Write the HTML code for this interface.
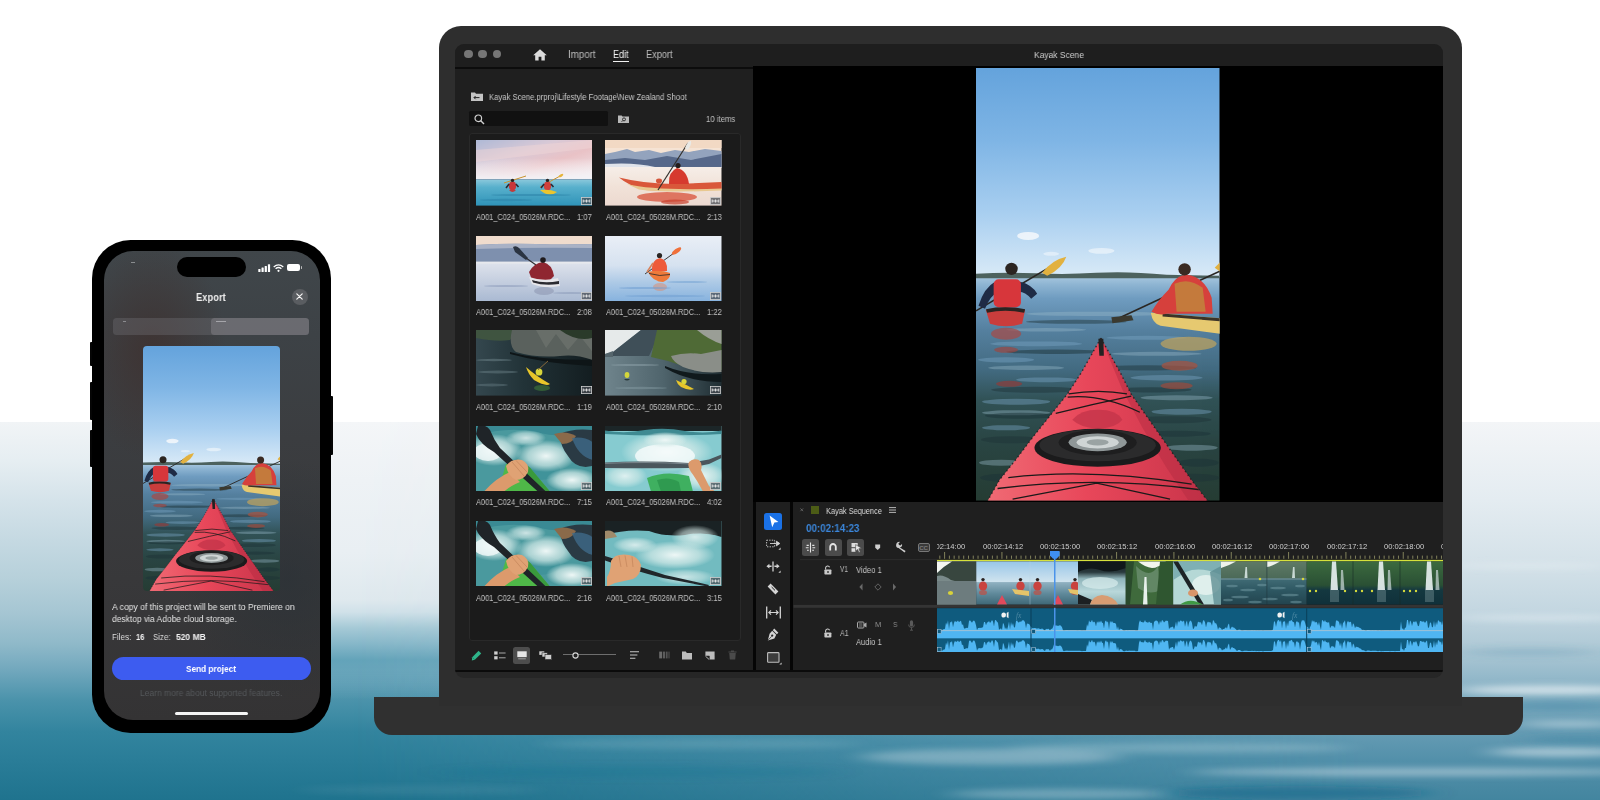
<!DOCTYPE html>
<html lang="en">
<head>
<meta charset="utf-8">
<title>Premiere – Kayak Scene</title>
<style>
*{box-sizing:border-box;margin:0;padding:0}
html,body{width:1600px;height:800px;overflow:hidden;background:#fff}
body{position:relative;font-family:"Liberation Sans",sans-serif;color:#c8c8c8;-webkit-font-smoothing:antialiased}
.abs{position:absolute}
.t{position:absolute;white-space:nowrap;line-height:1;transform-origin:0 50%;will-change:transform}
svg{position:absolute;overflow:visible}
/* background water */
#water{left:0;top:422px;width:1600px;height:378px}
/* laptop */
#lid{left:439px;top:26px;width:1023px;height:680px;background:#2e2e2e;border-radius:22px 22px 0 0}
#base{left:374px;top:697px;width:1149px;height:38px;background:#303030;border-radius:0 0 18px 18px}
#screen{left:455px;top:44px;width:988px;height:634px;background:#262626;border-radius:10px;overflow:hidden}
/* phone */
#phone{left:92px;top:240px;width:239px;height:493px;background:#000;border-radius:38.5px}
#pscreen{left:104px;top:251px;width:216px;height:469px;border-radius:35px;overflow:hidden;background:#3a3d40}
</style>
</head>
<body>
<svg width="0" height="0" style="left:0;top:0">
<defs>
<linearGradient id="gSky" x1="0" y1="0" x2="0" y2="1"><stop offset="0" stop-color="#64a3dc"/><stop offset=".35" stop-color="#7fb5e5"/><stop offset=".7" stop-color="#a9cff0"/><stop offset="1" stop-color="#d9eaf7"/></linearGradient>
<linearGradient id="gSea" x1="0" y1="0" x2="0" y2="1"><stop offset="0" stop-color="#a9c8e0"/><stop offset=".04" stop-color="#8db4d2"/><stop offset=".1" stop-color="#6f9cc0"/><stop offset=".24" stop-color="#55809f"/><stop offset=".42" stop-color="#426a80"/><stop offset=".55" stop-color="#315256"/><stop offset=".75" stop-color="#294442"/><stop offset="1" stop-color="#253c33"/></linearGradient>
<linearGradient id="gBow" x1="0" y1="0" x2="1" y2="0"><stop offset="0" stop-color="#f06a74"/><stop offset=".45" stop-color="#e8475a"/><stop offset="1" stop-color="#c9344a"/></linearGradient>
<symbol id="kscene" viewBox="0 0 243 433" preserveAspectRatio="none">
<rect x="0" y="0" width="243" height="209" fill="url(#gSky)"/>
<ellipse cx="52" cy="168" rx="11" ry="4" fill="#f4f8fc" opacity=".85"/><ellipse cx="125" cy="183" rx="13" ry="3" fill="#eef5fb" opacity=".7"/><ellipse cx="75" cy="186" rx="8" ry="2" fill="#eef5fb" opacity=".6"/>
<rect x="0" y="208" width="243" height="225" fill="url(#gSea)"/>
<path d="M0 206 Q30 204 60 205.5 T120 205 T190 207 L243 208 V210.5 H0 Z" fill="#4d625e"/>
<!-- ripples -->
<g fill="#9bbccc" opacity=".38"><ellipse cx="120" cy="246" rx="70" ry="2.2"/><ellipse cx="70" cy="262" rx="40" ry="1.8"/><ellipse cx="180" cy="286" rx="45" ry="2"/><ellipse cx="50" cy="300" rx="38" ry="2.2"/><ellipse cx="200" cy="330" rx="36" ry="2.4"/><ellipse cx="40" cy="345" rx="34" ry="2.6"/><ellipse cx="215" cy="380" rx="26" ry="3"/><ellipse cx="25" cy="395" rx="22" ry="3"/></g>
<g fill="#1d3236" opacity=".45"><ellipse cx="100" cy="254" rx="50" ry="2"/><ellipse cx="170" cy="300" rx="50" ry="2.6"/><ellipse cx="60" cy="322" rx="45" ry="3"/><ellipse cx="195" cy="352" rx="40" ry="3.4"/><ellipse cx="35" cy="372" rx="30" ry="3.6"/><ellipse cx="215" cy="410" rx="28" ry="4"/></g>
<g fill="#7aa6c6" opacity=".42"><ellipse cx="60" cy="276" rx="46" ry="2.4"/><ellipse cx="170" cy="270" rx="40" ry="2"/><ellipse cx="30" cy="292" rx="28" ry="2.6"/><ellipse cx="190" cy="310" rx="36" ry="2.8"/><ellipse cx="70" cy="312" rx="30" ry="2.4"/><ellipse cx="40" cy="334" rx="34" ry="3"/><ellipse cx="205" cy="344" rx="30" ry="3"/><ellipse cx="30" cy="360" rx="24" ry="2.6"/></g>
<g fill="#1c3338" opacity=".5"><ellipse cx="80" cy="284" rx="50" ry="2.2"/><ellipse cx="175" cy="322" rx="40" ry="2.6"/><ellipse cx="45" cy="348" rx="36" ry="3"/><ellipse cx="200" cy="366" rx="34" ry="3"/><ellipse cx="30" cy="410" rx="26" ry="4"/><ellipse cx="222" cy="395" rx="20" ry="4"/></g>
<!-- reflections -->
<g opacity=".7"><ellipse cx="30" cy="266" rx="15" ry="6" fill="#a84a46"/><ellipse cx="30" cy="282" rx="12" ry="3" fill="#9c4742"/><ellipse cx="33" cy="316" rx="13" ry="3" fill="#8e3c3a"/><ellipse cx="212" cy="276" rx="28" ry="7" fill="#c2a45c"/><ellipse cx="203" cy="298" rx="18" ry="5" fill="#a9523f"/><ellipse cx="200" cy="318" rx="16" ry="3.5" fill="#9a4a3c"/></g>
<!-- left kayaker -->
<path d="M0 243 L74 199" stroke="#2a2622" stroke-width="1.6"/>
<path d="M66 205 Q76 192 90 189 Q86 201 71 208 Z" fill="#e2b13f"/>
<path d="M9.8 242 Q29 238 49 242 L46 256 Q30 261 14 256 Z" fill="#c93d3c"/>
<path d="M10 241.5 Q29 237 49 241.5 L48 245 Q29 241 11 245 Z" fill="#2a2422"/>
<path d="M19 214 Q8 220 2.5 238 L9 241 Q14 228 22 224 Z M44 214 Q56 217 61 226 L55 231 Q49 224 43 224 Z" fill="#1f2b45"/>
<rect x="17.6" y="211.5" width="27.2" height="28" rx="5" fill="#d7363b"/>
<circle cx="35.4" cy="201" r="6.2" fill="#2b2421"/>
<!-- right kayaker -->
<path d="M139 252 L243.7 203" stroke="#2a2622" stroke-width="1.6"/>
<path d="M135 249.5 L155 247.5 L157 252.5 L136 255.5 Z" fill="#3b3a30"/>
<path d="M238 200 Q243.7 194 243.7 194 V204 Z" fill="#e2b13f"/>
<path d="M174.3 245 Q176 256 184 258 L243.7 266 V250.5 L186 245.7 Z" fill="#e6c970"/>
<path d="M186 245.7 L243.7 250.5 V253.5 L186 248.6 Z" fill="#3a3327"/>
<path d="M175 244 Q182 232 192 222 Q198 208 210 207 Q228 209 235 230 L236 246 H190 Q182 248 175 244 Z" fill="#d6403c"/>
<path d="M198 216 Q212 209 226 220 L229 244 H200 Z" fill="#c47a3c"/>
<circle cx="208" cy="201.5" r="6.2" fill="#3a2a22"/>
<!-- bow -->
<path d="M124.5 270.3 L105.1 304.7 L91.2 326.2 L74 347.7 L56.8 369.2 L40.6 390.7 L23.4 412.2 L11.6 433 H230.8 L214.8 412.2 L199.7 390.7 L184.7 369.2 L169.6 347.7 L154.6 326.2 L143.8 304.7 Z" fill="url(#gBow)"/>
<path d="M124.5 270.3 L143.8 304.7 L154.6 326.2 L169.6 347.7 L184.7 369.2 L199.7 390.7 L214.8 412.2 L230.8 433 H212 L190 400 L166 360 L146 322 Z" fill="#b52c42" opacity=".5"/>
<path d="M124.5 270.3 L105.1 304.7 L91.2 326.2 L74 347.7 L56.8 369.2 L40.6 390.7 L23.4 412.2 L11.6 433 M124.5 270.3 L143.8 304.7 L154.6 326.2 L169.6 347.7 L184.7 369.2 L199.7 390.7 L214.8 412.2 L230.8 433" stroke="#1c1a1a" stroke-width="1.4" stroke-dasharray="1.5 3" fill="none" opacity=".8"/>
<path d="M96 352 Q104 342 122 342 Q140 342 146 352 Q140 360 122 361 Q104 360 96 352 Z" fill="#c4354a" opacity=".8"/>
<g stroke="#1b1a1a" stroke-width="1.3" fill="none"><path d="M92.4 326.2 Q122.5 321 150.5 326.2"/><path d="M91.4 329.4 Q125 326 163.4 344.5"/><path d="M79.5 345.5 Q118 336 154.8 328.3"/><path d="M32.2 410 Q114 400 215 416.5"/><path d="M21.5 420.8 Q120 408 221.4 421.8"/><path d="M36.5 431.5 L120.4 415.4 L193.5 431.5"/></g>
<ellipse cx="121.3" cy="380" rx="63" ry="19" fill="#1b1b1c"/>
<ellipse cx="121.3" cy="377.5" rx="58" ry="16" fill="#2b2b2c"/>
<ellipse cx="121.3" cy="374.8" rx="39" ry="12.6" fill="#1e1e1f"/>
<ellipse cx="121.3" cy="374.6" rx="29" ry="8.8" fill="#8f9798"/>
<ellipse cx="121.3" cy="374.6" rx="21" ry="6.2" fill="#cfd5d5"/>
<ellipse cx="121.3" cy="374.6" rx="11" ry="3.2" fill="#9aa3a3"/>
<path d="M122 271 L127 271 L127.5 288 L123 288 Z" fill="#222"/>
</symbol>
</defs>
</svg>
<div id="water" class="abs" style="background:linear-gradient(180deg,#f1f4f6 0.0%,#e6eef2 10.1%,#d5e3ea 20.6%,#c5d9e2 31.2%,#b6d0da 41.8%,#a6c6d3 50.3%,#8fb9c9 58.7%,#74a9be 65.1%,#4b93ab 73.5%,#32849e 82.0%,#2a7d98 89.4%,#1f738e 100.0%)"></div>
<div class="abs" style="left:180px;top:422px;width:420px;height:378px;background:linear-gradient(180deg,#f4f6f8 0.0%,#eef2f5 15.3%,#e9eff3 34.4%,#dfe9ee 47.1%,#d0e1e9 50.3%,#a5c9d6 54.5%,#86b7c9 58.7%,#63a3b9 63.0%,rgba(69,144,169,0) 73.5%,rgba(69,144,169,0) 100.0%);-webkit-mask-image:linear-gradient(90deg,transparent 0%,#000 36%,#000 100%);mask-image:linear-gradient(90deg,transparent 0%,#000 36%,#000 100%)"></div>
<div class="abs" style="left:0;top:422px;width:1600px;height:378px;background:linear-gradient(180deg,#f3f5f7 0.0%,#e4ecf1 20.6%,#d5e2e9 36.5%,#c4d7e1 49.7%,#adc8d5 60.3%,#91b7c9 68.3%,#7dabbf 73.5%,#669cb4 81.5%,#5390aa 89.4%,#43859f 100.0%);-webkit-mask-image:linear-gradient(90deg,transparent 22%,#000 85%);mask-image:linear-gradient(90deg,transparent 22%,#000 85%)"></div>
<svg style="left:0;top:0" width="1600" height="800" viewBox="0 0 1600 800"><defs><filter id="fb" x="-30%" y="-300%" width="160%" height="700%"><feGaussianBlur stdDeviation="14 3"/></filter></defs>
<g filter="url(#fb)" fill="#eef4f7">
<ellipse cx="1545" cy="618" rx="90" ry="3" opacity=".5"/>
<ellipse cx="1530" cy="566" rx="80" ry="2.5" opacity=".45"/>
<ellipse cx="1550" cy="690" rx="90" ry="4.5" opacity=".7"/>
<ellipse cx="1570" cy="724" rx="50" ry="3" opacity=".45"/>
<ellipse cx="1560" cy="752" rx="70" ry="5" opacity=".5"/>
<ellipse cx="1420" cy="772" rx="230" ry="4" opacity=".42"/>
<ellipse cx="990" cy="757" rx="130" ry="8" opacity=".32"/>
<ellipse cx="1180" cy="748" rx="170" ry="5" opacity=".22"/>
<ellipse cx="1060" cy="794" rx="110" ry="5" opacity=".3"/>
<ellipse cx="700" cy="744" rx="160" ry="5" opacity=".12"/>
<ellipse cx="420" cy="790" rx="120" ry="4" opacity=".08"/>
</g>
<g filter="url(#fb)" fill="#3f85a3"><ellipse cx="1560" cy="706" rx="70" ry="5" opacity=".45"/><ellipse cx="1580" cy="740" rx="50" ry="5" opacity=".4"/><ellipse cx="1530" cy="652" rx="70" ry="4" opacity=".22"/></g>
<g filter="url(#fb)" fill="#14678a"><ellipse cx="1300" cy="793" rx="130" ry="7" opacity=".55"/><ellipse cx="640" cy="772" rx="200" ry="6" opacity=".18"/></g>
</svg>
<div id="base" class="abs"></div>
<div id="lid" class="abs"></div>
<div id="scr" class="abs" style="left:0;top:0;width:1600px;height:800px;clip-path:inset(44px 157px 122px 455px round 9px)">
<div class="abs" style="left:455.0px;top:44.0px;width:988.0px;height:634.0px;background:#262626;"></div>
<div class="abs" style="left:455.0px;top:44.0px;width:988.0px;height:23.0px;background:#1e1e1e;"></div>
<div class="abs" style="left:455.0px;top:66.9px;width:298.0px;height:1.7px;background:#0c0c0c;"></div>
<div class="abs" style="left:464.4px;top:49.6px;width:8.8px;height:8.8px;background:#767676;border-radius:50%"></div>
<div class="abs" style="left:478.4px;top:49.6px;width:8.8px;height:8.8px;background:#767676;border-radius:50%"></div>
<div class="abs" style="left:492.5px;top:49.6px;width:8.8px;height:8.8px;background:#767676;border-radius:50%"></div>
<svg style="left:533px;top:49px" width="14" height="12" viewBox="0 0 14 12"><path d="M7 0.3 L0.2 6.2 H2.2 V11.6 H5.6 V7.8 H8.4 V11.6 H11.8 V6.2 H13.8 Z" fill="#dcdcdc"/></svg>
<div class="t" style="left:568.3px;top:50.0px;font-size:10.00px;color:#bdbdbd;transform:scaleX(0.974);">Import</div>
<div class="t" style="left:613.4px;top:50.0px;font-size:10.00px;color:#f2f2f2;transform:scaleX(0.900);">Edit</div>
<div class="abs" style="left:613.4px;top:61.0px;width:15.5px;height:1.3px;background:#f2f2f2;"></div>
<div class="t" style="left:645.7px;top:50.0px;font-size:10.00px;color:#bdbdbd;transform:scaleX(0.920);">Export</div>
<div class="t" style="left:1033.5px;top:49.8px;font-size:9.60px;color:#d0d0d0;transform:scaleX(0.884);">Kayak Scene</div>
<div class="abs" style="left:455.0px;top:68.6px;width:298.0px;height:601.5px;background:#1f1f1f;"></div>
<div class="abs" style="left:753.0px;top:66.3px;width:3.0px;height:603.5px;background:#050505;"></div>
<svg style="left:470.5px;top:92px" width="12" height="9" viewBox="0 0 12 9"><path d="M0 0.6 H4 L5 1.8 H12 V9 H0 Z" fill="#c4c4c4"/><path d="M3 5.6 H8.5 M4.6 4 L3 5.6 L4.6 7.2" stroke="#222" stroke-width="1" fill="none"/></svg>
<div class="t" style="left:489.0px;top:92.5px;font-size:9.00px;color:#c6c6c6;transform:scaleX(0.855);">Kayak Scene.prproj\Lifestyle Footage\New Zealand Shoot</div>
<div class="abs" style="left:468.8px;top:110.5px;width:139.6px;height:15.6px;background:#111111;border-radius:1.5px"></div>
<svg style="left:474px;top:113.5px" width="11" height="11" viewBox="0 0 11 11"><circle cx="4.3" cy="4.3" r="3.3" fill="none" stroke="#cfcfcf" stroke-width="1.2"/><path d="M6.8 6.8 L10 10" stroke="#cfcfcf" stroke-width="1.4"/></svg>
<svg style="left:617.5px;top:114.5px" width="11" height="8" viewBox="0 0 11 8"><path d="M0 0.5 H3.6 L4.5 1.5 H11 V8 H0 Z" fill="#b9b9b9"/><circle cx="6" cy="4.4" r="1.5" fill="none" stroke="#222" stroke-width="0.9"/><path d="M4.9 5.5 L3.6 6.8" stroke="#222" stroke-width="0.9"/></svg>
<div class="t" style="left:706.0px;top:114.8px;font-size:8.80px;color:#c0c0c0;transform:scaleX(0.881);">10 items</div>
<div class="abs" style="left:469.0px;top:133.0px;width:272.0px;height:507.5px;background:#1b1b1b;border:1px solid #292929;border-radius:3px"></div>
<svg style="left:0;top:0" width="0" height="0"><defs>
<linearGradient id="t1s" x1="0" y1="0" x2="1" y2="1"><stop offset="0" stop-color="#aeb9d6"/><stop offset=".35" stop-color="#d9c9d6"/><stop offset=".6" stop-color="#e9c2c6"/><stop offset="1" stop-color="#f0e6ea"/></linearGradient>
<linearGradient id="t1f" x1="0" y1="0" x2="0" y2="1"><stop offset="0" stop-color="#fff" stop-opacity="0"/><stop offset="1" stop-color="#f2f4f8" stop-opacity=".95"/></linearGradient>
<linearGradient id="t1w" x1="0" y1="0" x2="0" y2="1"><stop offset="0" stop-color="#8cc9dc"/><stop offset=".3" stop-color="#58b0cc"/><stop offset="1" stop-color="#2f93b8"/></linearGradient>
<linearGradient id="t2w" x1="0" y1="0" x2="0" y2="1"><stop offset="0" stop-color="#f6eee8"/><stop offset=".5" stop-color="#f1e2d8"/><stop offset="1" stop-color="#ecd9d0"/></linearGradient>
<linearGradient id="t3w" x1="0" y1="0" x2="0" y2="1"><stop offset="0" stop-color="#dfe3ec"/><stop offset="1" stop-color="#a9b9d2"/></linearGradient>
<linearGradient id="t4w" x1="0" y1="0" x2="0" y2="1"><stop offset="0" stop-color="#e9eef6"/><stop offset=".45" stop-color="#d6e2f0"/><stop offset=".7" stop-color="#aecae6"/><stop offset="1" stop-color="#86b2de"/></linearGradient>
<linearGradient id="t5w" x1="0" y1="0" x2="1" y2="0"><stop offset="0" stop-color="#34474e"/><stop offset=".4" stop-color="#223338"/><stop offset="1" stop-color="#131d20"/></linearGradient>
<linearGradient id="t6w" x1="0" y1="0" x2="1" y2="0"><stop offset="0" stop-color="#6f848c"/><stop offset=".5" stop-color="#4f646c"/><stop offset="1" stop-color="#1f2d32"/></linearGradient>
<radialGradient id="tfoam" cx=".5" cy=".5" r=".5"><stop offset="0" stop-color="#eef7f6"/><stop offset=".6" stop-color="#d5ebe9" stop-opacity=".7"/><stop offset="1" stop-color="#dff1ef" stop-opacity="0"/></radialGradient>
<clipPath id="tclip"><rect x="0" y="0" width="116.5" height="65.6"/></clipPath>
</defs></svg>
<svg style="left:475.8px;top:140.3px;overflow:hidden" width="116.5" height="65.6" viewBox="0 0 116.5 65.6"><rect width="116.5" height="40" fill="url(#t1s)"/><rect y="18" width="116.5" height="22" fill="url(#t1f)"/><path d="M0 10 L116.5 0 V8 L0 22 Z" fill="#f2d6d8" opacity=".45"/><rect y="39.3" width="116.5" height="26.3" fill="url(#t1w)"/><rect y="39" width="116.5" height="1" fill="#6f8fa8" opacity=".7"/><path d="M28 43 L50 36" stroke="#c9932e" stroke-width="1"/><path d="M64 47 L86 35" stroke="#c9932e" stroke-width="1"/><ellipse cx="85" cy="35.6" rx="2.6" ry="1.2" fill="#e6b43a" transform="rotate(-30 85 35.6)"/><g transform="translate(36.5 46.0) scale(1.00)"><ellipse cx="0" cy="0" rx="3.6" ry="4.4" fill="#c8363a"/><circle cx="0" cy="-5.6" r="1.7" fill="#2a2220"/><path d="M-3.4 -2 L-6.5 2 M3.4 -2 L6 1" stroke="#2a2a35" stroke-width="1.6"/></g><g transform="translate(71.5 46.0) scale(1.00)"><ellipse cx="0" cy="0" rx="3.6" ry="4.4" fill="#d0403a"/><circle cx="0" cy="-5.6" r="1.7" fill="#2a2220"/><path d="M-3.4 -2 L-6.5 2 M3.4 -2 L6 1" stroke="#2a2a35" stroke-width="1.6"/></g><path d="M33 50 Q36.5 54 40 50 Z" fill="#c23a3a"/><path d="M64 50 Q73 58 81 52 Q74 49 64 50 Z" fill="#ecc52e"/><ellipse cx="55" cy="55" rx="40" ry="1" fill="#2a7fa6" opacity=".5"/><ellipse cx="30" cy="60" rx="26" ry="1.2" fill="#2a7fa6" opacity=".5"/></svg>
<svg style="left:605.4px;top:140.3px;overflow:hidden" width="116.5" height="65.6" viewBox="0 0 116.5 65.6"><rect width="116.5" height="28" fill="#f5e3d4"/><rect width="116.5" height="8" fill="#f2d9c4"/><path d="M0 14 L10 12 L22 9 L30 12 L44 10 L56 13 L70 10 L84 12 L100 9 L116.5 11 V27 H0 Z" fill="#93a3bd"/><path d="M0 20 L20 18 L40 20 L62 16 L86 20 L116.5 14 V28 H0 Z" fill="#56688a"/><path d="M0 24 Q30 22 50 27 H0 Z" fill="#dfe3ea"/><rect y="27" width="116.5" height="38.6" fill="url(#t2w)"/><ellipse cx="62" cy="57" rx="30" ry="5" fill="#d8503a" opacity=".75"/><ellipse cx="70" cy="62" rx="14" ry="2.5" fill="#c8402e" opacity=".7"/><path d="M14 37.5 Q40 44 70 44 L116.5 42 V49 Q70 52 40 50 Q24 46 14 37.5 Z" fill="#d9573a"/><path d="M22 44 Q50 51 116.5 48.5 V50.5 Q60 53 34 49.5 Z" fill="#e8c890"/><path d="M53 50 L83 3" stroke="#33302c" stroke-width="1.2"/><path d="M80 8 Q83 0 86 1 Q87 5 82.5 10 Z" fill="#e9e9e6"/><path d="M64 44 Q63 32 72 28 Q82 30 84 44 Z" fill="#d63a2e"/><circle cx="73" cy="25.5" r="2.6" fill="#231c1a"/><ellipse cx="54" cy="41" rx="3" ry="2.4" fill="#d4553a"/></svg>
<svg style="left:475.8px;top:235.5px;overflow:hidden" width="116.5" height="65.6" viewBox="0 0 116.5 65.6"><rect width="116.5" height="12" fill="#f0dccd"/><path d="M0 9 Q30 7 60 8 T116.5 8 V27 H0 Z" fill="#7e90ae"/><path d="M0 9 Q30 7 60 8 T116.5 8 V12 Q60 11 0 13 Z" fill="#a9b2c6"/><rect y="26" width="116.5" height="39.6" fill="url(#t3w)"/><rect y="25.5" width="116.5" height="2.2" fill="#e9eaee" opacity=".8"/><path d="M37 11 Q40 9 43 12 L52 22 L50 24 L39 16 Z" fill="#2b3442"/><path d="M50 22 L60 29" stroke="#2b2b30" stroke-width="1.1"/><path d="M53 36 Q58 27 67 26 Q76 28 78 40 L74 44 H56 Z" fill="#8f2630"/><circle cx="67" cy="24" r="2.8" fill="#1f1a1c"/><path d="M53 41 Q68 46 82 42 L84 50 Q68 53 56 48 Z" fill="#e6e6ea"/><path d="M56 44 Q68 48 83 45 L83 48 Q68 50 57 46.5 Z" fill="#2a2a30"/><ellipse cx="68" cy="55" rx="10" ry="4" fill="#8a93ae" opacity=".55"/><ellipse cx="30" cy="50" rx="22" ry="1" fill="#8f9fbd" opacity=".6"/><ellipse cx="95" cy="57" rx="18" ry="1" fill="#8f9fbd" opacity=".6"/></svg>
<svg style="left:605.4px;top:235.5px;overflow:hidden" width="116.5" height="65.6" viewBox="0 0 116.5 65.6"><rect width="116.5" height="65.6" fill="url(#t4w)"/><path d="M40 38 L76 12" stroke="#3a3a3a" stroke-width="1"/><ellipse cx="71.5" cy="15" rx="5.6" ry="2.2" fill="#f0703a" transform="rotate(-36 71.5 15)"/><path d="M47 35 Q46 24 55 22 Q63 24 62 35 Z" fill="#ee5a3a"/><circle cx="54.5" cy="19.5" r="2.6" fill="#2a2624"/><path d="M48 27 L42 36" stroke="#d8825a" stroke-width="1.6"/><path d="M43 36 Q55 33 65 37 Q66 43 58 46 Q48 46 43 36 Z" fill="#ee7a3a"/><path d="M44 37.5 Q55 41 65 38.5" stroke="#2a2a2a" stroke-width=".8" fill="none"/><ellipse cx="55" cy="51" rx="7" ry="4" fill="#e08a6a" opacity=".5"/><ellipse cx="40" cy="52" rx="26" ry="1.1" fill="#6f9fd2" opacity=".55"/><ellipse cx="82" cy="46" rx="20" ry="1" fill="#6f9fd2" opacity=".5"/><ellipse cx="60" cy="60" rx="40" ry="1.2" fill="#6f9fd2" opacity=".55"/></svg>
<svg style="left:475.8px;top:330.2px;overflow:hidden" width="116.5" height="65.6" viewBox="0 0 116.5 65.6"><rect width="116.5" height="65.6" fill="url(#t5w)"/><path d="M0 0 H40 L34 10 Q20 12 0 8 Z" fill="#3f5440"/><path d="M36 0 H116.5 V30 Q100 24 84 26 Q60 28 40 22 Q32 16 36 0 Z" fill="#5a615d"/><path d="M60 0 L70 18 L80 4 L92 20 L104 6 L116.5 22 V0 Z" fill="#767b75" opacity=".5"/><path d="M84 0 H116.5 V8 Q100 12 84 0 Z" fill="#2a3a2a"/><path d="M34 22 Q60 30 116.5 30 V36 Q70 34 34 24 Z" fill="#0e1517"/><ellipse cx="18" cy="30" rx="18" ry="1.2" fill="#6f858c" opacity=".5"/><ellipse cx="22" cy="42" rx="20" ry="1.4" fill="#6f858c" opacity=".45"/><ellipse cx="16" cy="55" rx="16" ry="1.4" fill="#6f858c" opacity=".4"/><path d="M50 37 Q60 46 74 54 Q70 57 58 50 Q52 44 50 37 Z" fill="#e8c62a"/><ellipse cx="63" cy="42" rx="3.4" ry="3.6" fill="#d9d63a"/><path d="M62 40 L72 31" stroke="#8a6a3a" stroke-width="1"/><ellipse cx="66" cy="58" rx="8" ry="3" fill="#3f7a3a" opacity=".6"/></svg>
<svg style="left:605.4px;top:330.2px;overflow:hidden" width="116.5" height="65.6" viewBox="0 0 116.5 65.6"><rect width="116.5" height="65.6" fill="url(#t6w)"/><path d="M0 0 H36 L8 22 L0 24 Z" fill="#e6eaea"/><path d="M36 0 H56 L44 26 H8 L8 22 Z" fill="#3f4f58"/><path d="M0 24 L8 21 L8 27 H0 Z" fill="#55656c"/><path d="M52 0 H116.5 V40 Q96 42 78 36 Q62 30 46 27 Z" fill="#4f6a36"/><path d="M66 26 Q80 22 96 24 L116.5 20 V42 Q96 44 78 37 Q68 32 66 26 Z" fill="#8a8e88"/><path d="M92 0 L116.5 0 V14 Q104 10 92 0 Z" fill="#9a9e96"/><path d="M60 36 Q84 46 116.5 44 V52 Q84 52 60 38 Z" fill="#10191c"/><ellipse cx="22" cy="45" rx="2.4" ry="3" fill="#d4d63a"/><path d="M19 49 Q22 52 25 49 Z" fill="#2a3a3a"/><path d="M71 50 Q80 54 89 59 Q84 61 76 57 Q72 54 71 50 Z" fill="#e8c62a"/><ellipse cx="79" cy="51.5" rx="2.6" ry="2.6" fill="#d9d63a"/><ellipse cx="30" cy="35" rx="24" ry="1" fill="#8fa4ac" opacity=".5"/><ellipse cx="36" cy="58" rx="26" ry="1.2" fill="#8fa4ac" opacity=".4"/></svg>
<svg style="left:475.8px;top:425.5px;overflow:hidden" width="116.5" height="65.6" viewBox="0 0 116.5 65.6"><rect width="116.5" height="65.6" fill="#4a999e"/><path d="M0 10 Q30 0 60 6 Q90 14 116.5 4 V0 H0 Z" fill="#3a8a94"/><ellipse cx="62" cy="44" rx="22" ry="10" fill="#3a8f98" opacity=".6"/><ellipse cx="18" cy="24" rx="28" ry="16" fill="url(#tfoam)"/><ellipse cx="12" cy="26" rx="14" ry="9" fill="#f4fafa" opacity=".8"/><ellipse cx="70" cy="30" rx="30" ry="16" fill="url(#tfoam)"/><ellipse cx="96" cy="54" rx="26" ry="12" fill="url(#tfoam)"/><ellipse cx="50" cy="12" rx="20" ry="8" fill="url(#tfoam)" opacity=".8"/><path d="M84 8 Q96 2 116.5 4 V40 Q100 44 92 30 Q84 20 84 8 Z" fill="#2a3a44"/><path d="M78 8 Q90 4 100 10 Q96 18 86 18 Z" fill="#8a6a4a"/><path d="M96 12 Q108 10 116.5 16 V34 Q102 30 96 12 Z" fill="#3f6a8a" opacity=".8"/><path d="M30 38 Q48 34 54 42 L74 65.6 H22 Z" fill="#4fb848"/><path d="M44 40 Q52 38 56 44 L74 65.6 H62 Z" fill="#3a9a3c"/><path d="M2 0 Q10 -2 14 4 Q18 14 24 22 L70 65.6 H62 L18 26 Q4 18 0 8 Z" fill="#1f2428"/><path d="M8 65.6 Q20 52 34 46 L44 56 Q34 60 28 65.6 Z" fill="#dc9a6c"/><path d="M30 40 Q36 32 46 34 Q54 38 52 46 Q48 54 40 54 Q32 50 30 40 Z" fill="#e0a274"/><path d="M36 36 L48 50 M40 34.5 L51 46" stroke="#b87850" stroke-width=".7" opacity=".7"/></svg>
<svg style="left:605.4px;top:425.5px;overflow:hidden" width="116.5" height="65.6" viewBox="0 0 116.5 65.6"><rect width="116.5" height="65.6" fill="#86cbd0"/><rect width="116.5" height="5" fill="#1c2628"/><path d="M0 4.5 Q20 8 40 4 Q60 1 80 5 Q100 8 116.5 4.5 V8 Q60 11 0 8 Z" fill="#3f8a92"/><ellipse cx="62" cy="26" rx="46" ry="20" fill="url(#tfoam)"/><ellipse cx="60" cy="30" rx="30" ry="12" fill="#f6fbfb" opacity=".8"/><ellipse cx="96" cy="50" rx="24" ry="14" fill="url(#tfoam)"/><ellipse cx="20" cy="50" rx="22" ry="12" fill="url(#tfoam)" opacity=".85"/><ellipse cx="60" cy="14" rx="22" ry="8" fill="url(#tfoam)"/><path d="M42 52 Q60 44 84 50 L88 65.6 H46 Z" fill="#3fb060"/><path d="M52 54 Q64 50 74 56 L76 65.6 H56 Z" fill="#2f9a50"/><path d="M0 36.5 Q40 34.5 84 37 L104 33.5 L116.5 28.5 V32 L104 38 L84 42 Q40 42.5 0 42 Z" fill="#4a565c"/><path d="M0 37.4 Q40 35.4 84 37.9" stroke="#9aa6ac" stroke-width=".6" fill="none"/><path d="M84 36 Q88 32 94 34 Q98 38 96 44 L104 60 L110 65.6 H98 Q92 54 86 46 Q82 40 84 36 Z" fill="#dc9a6c"/></svg>
<svg style="left:475.8px;top:520.8px;overflow:hidden" width="116.5" height="65.6" viewBox="0 0 116.5 65.6"><rect width="116.5" height="65.6" fill="#4a999e"/><path d="M0 10 Q30 0 60 6 Q90 14 116.5 4 V0 H0 Z" fill="#3a8a94"/><ellipse cx="62" cy="44" rx="22" ry="10" fill="#3a8f98" opacity=".6"/><ellipse cx="18" cy="24" rx="28" ry="16" fill="url(#tfoam)"/><ellipse cx="12" cy="26" rx="14" ry="9" fill="#f4fafa" opacity=".8"/><ellipse cx="70" cy="30" rx="30" ry="16" fill="url(#tfoam)"/><ellipse cx="96" cy="54" rx="26" ry="12" fill="url(#tfoam)"/><ellipse cx="50" cy="12" rx="20" ry="8" fill="url(#tfoam)" opacity=".8"/><path d="M84 8 Q96 2 116.5 4 V40 Q100 44 92 30 Q84 20 84 8 Z" fill="#2a3a44"/><path d="M78 8 Q90 4 100 10 Q96 18 86 18 Z" fill="#8a6a4a"/><path d="M96 12 Q108 10 116.5 16 V34 Q102 30 96 12 Z" fill="#3f6a8a" opacity=".8"/><path d="M30 38 Q48 34 54 42 L74 65.6 H22 Z" fill="#4fb848"/><path d="M44 40 Q52 38 56 44 L74 65.6 H62 Z" fill="#3a9a3c"/><path d="M2 0 Q10 -2 14 4 Q18 14 24 22 L70 65.6 H62 L18 26 Q4 18 0 8 Z" fill="#1f2428"/><path d="M8 65.6 Q20 52 34 46 L44 56 Q34 60 28 65.6 Z" fill="#dc9a6c"/><path d="M30 40 Q36 32 46 34 Q54 38 52 46 Q48 54 40 54 Q32 50 30 40 Z" fill="#e0a274"/><path d="M36 36 L48 50 M40 34.5 L51 46" stroke="#b87850" stroke-width=".7" opacity=".7"/></svg>
<svg style="left:605.4px;top:520.8px;overflow:hidden" width="116.5" height="65.6" viewBox="0 0 116.5 65.6"><rect width="116.5" height="65.6" fill="#72bbc0"/><path d="M0 0 H116.5 V16 Q100 10 80 14 Q60 16 44 10 Q20 8 0 14 Z" fill="#1a2224"/><path d="M0 10 Q8 8 12 16 L0 18 Z" fill="#a08a6a"/><ellipse cx="70" cy="34" rx="40" ry="14" fill="url(#tfoam)"/><ellipse cx="90" cy="16" rx="24" ry="12" fill="url(#tfoam)" opacity=".8"/><ellipse cx="30" cy="24" rx="22" ry="8" fill="url(#tfoam)" opacity=".8"/><ellipse cx="80" cy="56" rx="30" ry="8" fill="url(#tfoam)" opacity=".7"/><path d="M0 35 Q30 44 60 54 L104 64 L103 65.6 L58 57 Q30 50 0 39.5 Z" fill="#20262a"/><path d="M6 40 Q10 32 24 34 Q34 36 36 44 Q36 54 28 58 L10 62 L2 65.6 V56 Q6 50 6 40 Z" fill="#e0a274"/><path d="M14 35 L16 46 M20 34.5 L22 46 M27 35.5 L28 46" stroke="#b87850" stroke-width=".7" opacity=".7"/></svg>
<div class="t" style="left:476.1px;top:212.9px;font-size:8.30px;color:#c2c2c2;transform:scaleX(0.892);">A001_C024_05026M.RDC...</div>
<div class="t" style="left:577.0px;top:212.9px;font-size:8.30px;color:#c2c2c2;transform:scaleX(0.916);">1:07</div>
<svg style="left:580.6px;top:196.5px" width="11" height="8" viewBox="0 0 11 8"><rect x="0.4" y="0.4" width="10.2" height="7.2" fill="#4a4f55" fill-opacity=".75" stroke="#d0d0d0" stroke-width=".8"/><path d="M2.2 2.5V5.5M5.5 2.5V5.5M8.8 2.5V5.5M2.2 4H8.8" stroke="#e6e6e6" stroke-width=".9"/></svg>
<div class="t" style="left:605.7px;top:212.9px;font-size:8.30px;color:#c2c2c2;transform:scaleX(0.892);">A001_C024_05026M.RDC...</div>
<div class="t" style="left:706.6px;top:212.9px;font-size:8.30px;color:#c2c2c2;transform:scaleX(0.916);">2:13</div>
<svg style="left:710.2px;top:196.5px" width="11" height="8" viewBox="0 0 11 8"><rect x="0.4" y="0.4" width="10.2" height="7.2" fill="#4a4f55" fill-opacity=".75" stroke="#d0d0d0" stroke-width=".8"/><path d="M2.2 2.5V5.5M5.5 2.5V5.5M8.8 2.5V5.5M2.2 4H8.8" stroke="#e6e6e6" stroke-width=".9"/></svg>
<div class="t" style="left:476.1px;top:308.2px;font-size:8.30px;color:#c2c2c2;transform:scaleX(0.892);">A001_C024_05026M.RDC...</div>
<div class="t" style="left:577.0px;top:308.2px;font-size:8.30px;color:#c2c2c2;transform:scaleX(0.916);">2:08</div>
<svg style="left:580.6px;top:291.7px" width="11" height="8" viewBox="0 0 11 8"><rect x="0.4" y="0.4" width="10.2" height="7.2" fill="#4a4f55" fill-opacity=".75" stroke="#d0d0d0" stroke-width=".8"/><path d="M2.2 2.5V5.5M5.5 2.5V5.5M8.8 2.5V5.5M2.2 4H8.8" stroke="#e6e6e6" stroke-width=".9"/></svg>
<div class="t" style="left:605.7px;top:308.2px;font-size:8.30px;color:#c2c2c2;transform:scaleX(0.892);">A001_C024_05026M.RDC...</div>
<div class="t" style="left:706.6px;top:308.2px;font-size:8.30px;color:#c2c2c2;transform:scaleX(0.916);">1:22</div>
<svg style="left:710.2px;top:291.7px" width="11" height="8" viewBox="0 0 11 8"><rect x="0.4" y="0.4" width="10.2" height="7.2" fill="#4a4f55" fill-opacity=".75" stroke="#d0d0d0" stroke-width=".8"/><path d="M2.2 2.5V5.5M5.5 2.5V5.5M8.8 2.5V5.5M2.2 4H8.8" stroke="#e6e6e6" stroke-width=".9"/></svg>
<div class="t" style="left:476.1px;top:402.8px;font-size:8.30px;color:#c2c2c2;transform:scaleX(0.892);">A001_C024_05026M.RDC...</div>
<div class="t" style="left:577.0px;top:402.8px;font-size:8.30px;color:#c2c2c2;transform:scaleX(0.916);">1:19</div>
<svg style="left:580.6px;top:386.4px" width="11" height="8" viewBox="0 0 11 8"><rect x="0.4" y="0.4" width="10.2" height="7.2" fill="#4a4f55" fill-opacity=".75" stroke="#d0d0d0" stroke-width=".8"/><path d="M2.2 2.5V5.5M5.5 2.5V5.5M8.8 2.5V5.5M2.2 4H8.8" stroke="#e6e6e6" stroke-width=".9"/></svg>
<div class="t" style="left:605.7px;top:402.8px;font-size:8.30px;color:#c2c2c2;transform:scaleX(0.892);">A001_C024_05026M.RDC...</div>
<div class="t" style="left:706.6px;top:402.8px;font-size:8.30px;color:#c2c2c2;transform:scaleX(0.916);">2:10</div>
<svg style="left:710.2px;top:386.4px" width="11" height="8" viewBox="0 0 11 8"><rect x="0.4" y="0.4" width="10.2" height="7.2" fill="#4a4f55" fill-opacity=".75" stroke="#d0d0d0" stroke-width=".8"/><path d="M2.2 2.5V5.5M5.5 2.5V5.5M8.8 2.5V5.5M2.2 4H8.8" stroke="#e6e6e6" stroke-width=".9"/></svg>
<div class="t" style="left:476.1px;top:498.2px;font-size:8.30px;color:#c2c2c2;transform:scaleX(0.892);">A001_C024_05026M.RDC...</div>
<div class="t" style="left:577.0px;top:498.2px;font-size:8.30px;color:#c2c2c2;transform:scaleX(0.916);">7:15</div>
<svg style="left:580.6px;top:481.7px" width="11" height="8" viewBox="0 0 11 8"><rect x="0.4" y="0.4" width="10.2" height="7.2" fill="#4a4f55" fill-opacity=".75" stroke="#d0d0d0" stroke-width=".8"/><path d="M2.2 2.5V5.5M5.5 2.5V5.5M8.8 2.5V5.5M2.2 4H8.8" stroke="#e6e6e6" stroke-width=".9"/></svg>
<div class="t" style="left:605.7px;top:498.2px;font-size:8.30px;color:#c2c2c2;transform:scaleX(0.892);">A001_C024_05026M.RDC...</div>
<div class="t" style="left:706.6px;top:498.2px;font-size:8.30px;color:#c2c2c2;transform:scaleX(0.916);">4:02</div>
<svg style="left:710.2px;top:481.7px" width="11" height="8" viewBox="0 0 11 8"><rect x="0.4" y="0.4" width="10.2" height="7.2" fill="#4a4f55" fill-opacity=".75" stroke="#d0d0d0" stroke-width=".8"/><path d="M2.2 2.5V5.5M5.5 2.5V5.5M8.8 2.5V5.5M2.2 4H8.8" stroke="#e6e6e6" stroke-width=".9"/></svg>
<div class="t" style="left:476.1px;top:593.5px;font-size:8.30px;color:#c2c2c2;transform:scaleX(0.892);">A001_C024_05026M.RDC...</div>
<div class="t" style="left:577.0px;top:593.5px;font-size:8.30px;color:#c2c2c2;transform:scaleX(0.916);">2:16</div>
<svg style="left:580.6px;top:577.0px" width="11" height="8" viewBox="0 0 11 8"><rect x="0.4" y="0.4" width="10.2" height="7.2" fill="#4a4f55" fill-opacity=".75" stroke="#d0d0d0" stroke-width=".8"/><path d="M2.2 2.5V5.5M5.5 2.5V5.5M8.8 2.5V5.5M2.2 4H8.8" stroke="#e6e6e6" stroke-width=".9"/></svg>
<div class="t" style="left:605.7px;top:593.5px;font-size:8.30px;color:#c2c2c2;transform:scaleX(0.892);">A001_C024_05026M.RDC...</div>
<div class="t" style="left:706.6px;top:593.5px;font-size:8.30px;color:#c2c2c2;transform:scaleX(0.916);">3:15</div>
<svg style="left:710.2px;top:577.0px" width="11" height="8" viewBox="0 0 11 8"><rect x="0.4" y="0.4" width="10.2" height="7.2" fill="#4a4f55" fill-opacity=".75" stroke="#d0d0d0" stroke-width=".8"/><path d="M2.2 2.5V5.5M5.5 2.5V5.5M8.8 2.5V5.5M2.2 4H8.8" stroke="#e6e6e6" stroke-width=".9"/></svg>
<svg style="left:471px;top:649.5px" width="11" height="11" viewBox="0 0 11 11"><path d="M7.6 .8 L10.2 3.4 L3.8 9.8 L.8 10.4 L1.2 7.2 Z" fill="#2fb58a"/><path d="M1.2 7.2 L3.8 9.8" stroke="#1a7a5c" stroke-width=".6"/></svg>
<svg style="left:493.5px;top:651px" width="12" height="9" viewBox="0 0 12 9"><rect x=".2" y=".4" width="3.4" height="3.2" fill="#d0d0d0"/><rect x=".2" y="5.2" width="3.4" height="3.2" fill="#d0d0d0"/><path d="M5 2 H11.6 M5 6.8 H11.6" stroke="#a8a8a8" stroke-width="1"/></svg>
<div class="abs" style="left:513.3px;top:646.5px;width:17.0px;height:17.0px;background:#4d4d4d;border-radius:2.5px"></div>
<svg style="left:517px;top:650.5px" width="10" height="9" viewBox="0 0 10 9"><rect x=".3" y=".3" width="9.4" height="5.8" fill="#e6e6e6"/><path d="M1.2 7.8 H8.8" stroke="#a0a0a0" stroke-width="1"/></svg>
<svg style="left:538.5px;top:651px" width="13" height="9" viewBox="0 0 13 9"><rect x=".3" y=".3" width="5" height="3.6" fill="#d0d0d0"/><rect x="3" y="1.8" width="5.4" height="4.2" fill="#d0d0d0" stroke="#222" stroke-width=".6"/><rect x="6" y="3.6" width="6.6" height="5" fill="#d0d0d0" stroke="#222" stroke-width=".6"/></svg>
<div class="abs" style="left:562.5px;top:654.4px;width:53.5px;height:0.9px;background:#6e6e6e;"></div>
<svg style="left:572px;top:651.5px" width="7" height="7" viewBox="0 0 7 7"><circle cx="3.5" cy="3.5" r="2.6" fill="#222" stroke="#d8d8d8" stroke-width="1.1"/></svg>
<svg style="left:629.5px;top:651px" width="9" height="8" viewBox="0 0 9 8"><path d="M0 .7 H9 M0 4 H7.4 M0 7.3 H5.4" stroke="#c6c6c6" stroke-width="1.1"/></svg>
<svg style="left:658.5px;top:651px" width="11" height="8" viewBox="0 0 11 8"><rect x=".2" y=".6" width="2.8" height="6.8" fill="#6a6a6a"/><rect x="3.8" y=".6" width="2.4" height="6.8" fill="#5c5c5c"/><rect x="7" y=".6" width="1.6" height="6.8" fill="#555"/><rect x="9.4" y=".6" width="1.2" height="6.8" fill="#4c4c4c"/></svg>
<svg style="left:682px;top:650.5px" width="10" height="9" viewBox="0 0 10 9"><path d="M0 .6 H3.8 L4.8 2 H10 V8.6 H0 Z" fill="#bdbdbd"/></svg>
<svg style="left:705px;top:650.5px" width="10" height="9" viewBox="0 0 10 9"><path d="M.4 .4 H9.6 V8.6 H4.4 L.4 5 Z" fill="#bdbdbd"/><path d="M.4 5 H4.4 V8.6" fill="#222" stroke="#222" stroke-width=".5"/><path d="M.6 5.4 L4 8.4" stroke="#bdbdbd" stroke-width=".8"/></svg>
<svg style="left:727.5px;top:650px" width="9" height="10" viewBox="0 0 9 10"><path d="M.4 2 H8.6 M3 1 H6" stroke="#4a4a4a" stroke-width="1.1"/><path d="M1.2 3 H7.8 L7.2 9.6 H1.8 Z" fill="#4a4a4a"/></svg>
<div class="abs" style="left:753.0px;top:66.3px;width:690.5px;height:435.3px;background:#000;"></div>
<svg style="left:976.2px;top:68.3px" width="243.7" height="432.7"><use href="#kscene" width="243.7" height="432.7"/></svg>
<div class="abs" style="left:756.0px;top:501.6px;width:34.0px;height:168.0px;background:#1f1f1f;"></div>
<div class="abs" style="left:790.0px;top:501.6px;width:2.8px;height:168.0px;background:#050505;"></div>
<div class="abs" style="left:792.8px;top:501.6px;width:651.0px;height:168.0px;background:#1f1f1f;"></div>
<div class="abs" style="left:455.0px;top:669.5px;width:988.0px;height:2.0px;background:#0b0b0b;"></div>
<div class="abs" style="left:764.2px;top:512.8px;width:18.0px;height:17.4px;background:#1a71e6;border-radius:2.5px"></div>
<svg style="left:768.5px;top:515px" width="10" height="13" viewBox="0 0 10 13"><path d="M0.6 0.4 L9.4 7 L5.4 7.6 L3.2 12.2 Z" fill="#fff"/></svg>
<svg style="left:766px;top:538.5px" width="15" height="11" viewBox="0 0 15 11"><rect x=".6" y="1.2" width="8" height="6.6" fill="none" stroke="#bdbdbd" stroke-width="1" stroke-dasharray="1.4 1.2"/><path d="M4 4.5 H10.4 V2.2 L13.8 4.5 L10.4 6.8 V4.5" fill="#d4d4d4" stroke="#d4d4d4" stroke-width=".9"/><path d="M14.6 8.6 V10.8 H12.4 Z" fill="#cfcfcf"/></svg>
<svg style="left:766px;top:560.5px" width="15" height="12" viewBox="0 0 15 12"><path d="M7 .4V10.4" stroke="#d4d4d4" stroke-width="1.3"/><path d="M0.4 5.2 L3.4 2.8 V4.4 H5.6 V6 H3.4 V7.6 Z M13.6 5.2 L10.6 2.8 V4.4 H8.4 V6 H10.6 V7.6 Z" fill="#d4d4d4"/><path d="M14.6 9.6 V11.8 H12.4 Z" fill="#cfcfcf"/></svg>
<svg style="left:767px;top:583px" width="12" height="12" viewBox="0 0 12 12"><path d="M3.6 0.6 L11.4 8.4 L8.4 11.4 L0.6 3.6 Z" fill="#d4d4d4"/><path d="M4.6 4 L8 7.4" stroke="#222" stroke-width="1"/></svg>
<svg style="left:766px;top:606px" width="15" height="13" viewBox="0 0 15 13"><path d="M.7 .4V12.6M14.3 .4V12.6" stroke="#d4d4d4" stroke-width="1.3"/><path d="M3 6.5H12M5 4.3L2.8 6.5L5 8.7M10 4.3L12.2 6.5L10 8.7" stroke="#d4d4d4" stroke-width="1.1" fill="none"/></svg>
<svg style="left:767px;top:628px" width="12" height="13" viewBox="0 0 12 13"><path d="M7.2 .6 L11.4 4.8 L9.8 6.2 L5.8 2.2 Z" fill="#d4d4d4"/><path d="M5.2 2.8 L9.2 6.8 L7.4 10.4 L.8 12.4 L2.6 5.8 Z" fill="#d4d4d4"/><circle cx="5.2" cy="7.6" r="1.1" fill="#222"/><path d="M.8 12.4 L4.6 8.4" stroke="#222" stroke-width=".7"/></svg>
<svg style="left:766.5px;top:651.5px" width="15" height="13" viewBox="0 0 15 13"><rect x=".6" y=".6" width="11.4" height="9.6" rx=".8" fill="#3c3c3c" stroke="#bdbdbd" stroke-width="1.1"/><path d="M14.6 10.4 V12.6 H12.4 Z" fill="#cfcfcf"/></svg>
<svg style="left:800.2px;top:508.2px" width="3.6" height="3.6" viewBox="0 0 5 5"><path d="M0.6 0.6 L4.4 4.4 M4.4 0.6 L0.6 4.4" stroke="#8a8a8a" stroke-width=".8"/></svg>
<div class="abs" style="left:810.8px;top:505.6px;width:8.0px;height:8.2px;background:#4c5c16;"></div>
<div class="t" style="left:825.8px;top:505.7px;font-size:9.40px;color:#dcdcdc;transform:scaleX(0.788);">Kayak Sequence</div>
<svg style="left:889px;top:506.8px" width="7" height="6" viewBox="0 0 7 6"><path d="M0 0.6 H7 M0 3 H7 M0 5.4 H7" stroke="#b5b5b5" stroke-width="1"/></svg>
<div class="t" style="left:805.5px;top:523.3px;font-size:10.60px;color:#3b86da;font-weight:700;transform:scaleX(0.926);">00:02:14:23</div>
<div class="abs" style="left:802.0px;top:538.5px;width:17.0px;height:17.0px;background:#4b4b4b;border-radius:2.5px"></div>
<div class="abs" style="left:824.6px;top:538.5px;width:17.0px;height:17.0px;background:#4b4b4b;border-radius:2.5px"></div>
<div class="abs" style="left:847.2px;top:538.5px;width:17.0px;height:17.0px;background:#4b4b4b;border-radius:2.5px"></div>
<svg style="left:805px;top:541.5px" width="11" height="11" viewBox="0 0 11 11"><path d="M5.5 0.5V10.5M0.8 5.8H3.6M7.4 5.8H10.2M1.6 3.4H3.8M7.2 3.4H9.4M2 8.2H3.8M7.2 8.2H9" stroke="#e4e4e4" stroke-width="1.1" fill="none"/></svg>
<svg style="left:829.2px;top:543px" width="8" height="8" viewBox="0 0 8 8"><path d="M1.2 7.4V3.8A2.8 2.8 0 0 1 6.8 3.8V7.4" stroke="#e4e4e4" stroke-width="1.8" fill="none"/></svg>
<svg style="left:850.5px;top:541.5px" width="11" height="11" viewBox="0 0 11 11"><rect x="0.5" y="1" width="6.2" height="4.2" fill="#dcdcdc"/><rect x="0.5" y="6.2" width="4" height="3.6" fill="#dcdcdc"/><path d="M4.6 2.6 L10.6 6.2 L7.8 6.8 L9.2 9.8 L8 10.4 L6.6 7.4 L4.6 9 Z" fill="#e8e8e8" stroke="#4b4b4b" stroke-width=".6"/></svg>
<svg style="left:875.4px;top:543.6px" width="5.4" height="6.4" viewBox="0 0 7 8"><path d="M0.3 0.5 H6.7 V4.6 L3.5 7.8 L0.3 4.6 Z" fill="#cfcfcf"/></svg>
<svg style="left:895px;top:541px" width="12" height="12" viewBox="0 0 12 12"><path d="M1.2 3.4 A3 3 0 0 1 5 0.9 L3.4 2.6 L4 4 L5.4 4.6 L7 3 A3 3 0 0 1 4.8 6.6 L10.6 10 L9.6 11.4 L3.6 7 A3 3 0 0 1 1.2 3.4 Z" fill="#cdcdcd"/></svg>
<div class="abs" style="left:917.5px;top:542.5px;width:12px;height:9px;border:1px solid #777;border-radius:2px;background:#3a3a3a;color:#7a7a7a;font-size:6.2px;font-weight:700;line-height:7px;text-align:center;letter-spacing:-.2px">CC</div>
<div class="abs" style="left:937px;top:538px;width:506px;height:132px;overflow:hidden">
<div class="t" style="left:-11.7px;top:4.5px;font-size:7.60px;color:#cfcfcf;">00:02:14:00</div>
<div class="t" style="left:45.6px;top:4.5px;font-size:7.60px;color:#cfcfcf;">00:02:14:12</div>
<div class="t" style="left:103.0px;top:4.5px;font-size:7.60px;color:#cfcfcf;">00:02:15:00</div>
<div class="t" style="left:160.3px;top:4.5px;font-size:7.60px;color:#cfcfcf;">00:02:15:12</div>
<div class="t" style="left:217.6px;top:4.5px;font-size:7.60px;color:#cfcfcf;">00:02:16:00</div>
<div class="t" style="left:274.9px;top:4.5px;font-size:7.60px;color:#cfcfcf;">00:02:16:12</div>
<div class="t" style="left:332.3px;top:4.5px;font-size:7.60px;color:#cfcfcf;">00:02:17:00</div>
<div class="t" style="left:389.6px;top:4.5px;font-size:7.60px;color:#cfcfcf;">00:02:17:12</div>
<div class="t" style="left:446.9px;top:4.5px;font-size:7.60px;color:#cfcfcf;">00:02:18:00</div>
<div class="t" style="left:504.3px;top:4.5px;font-size:7.60px;color:#cfcfcf;">00:02:18:12</div>
</div>
<svg style="left:0;top:0" width="1600" height="800" viewBox="0 0 1600 800">
<defs><clipPath id="cTL"><rect x="937" y="538" width="506" height="132"/></clipPath>
<linearGradient id="gC2" x1="0" y1="0" x2="0" y2="1"><stop offset="0" stop-color="#98c6e8"/><stop offset=".47" stop-color="#cfe3ee"/><stop offset=".49" stop-color="#8fb0c0"/><stop offset=".75" stop-color="#5f899a"/><stop offset="1" stop-color="#3f6877"/></linearGradient>
<linearGradient id="gC6" x1="0" y1="0" x2="0" y2="1"><stop offset="0" stop-color="#5f7a66"/><stop offset=".38" stop-color="#4c6a58"/><stop offset=".42" stop-color="#3f6a74"/><stop offset=".7" stop-color="#2c5560"/><stop offset="1" stop-color="#23444e"/></linearGradient>
<linearGradient id="gC7" x1="0" y1="0" x2="0" y2="1"><stop offset="0" stop-color="#3c6a3f"/><stop offset=".55" stop-color="#2a5034"/><stop offset=".66" stop-color="#143840"/><stop offset="1" stop-color="#10303a"/></linearGradient>
<linearGradient id="gC3" x1="0" y1="0" x2="0" y2="1"><stop offset="0" stop-color="#141b1e"/><stop offset=".25" stop-color="#2a3a3e"/><stop offset=".4" stop-color="#8fb4ba"/><stop offset=".7" stop-color="#b9d8da"/><stop offset="1" stop-color="#8fb5b8"/></linearGradient>
</defs><g clip-path="url(#cTL)">
<path d="M887.27 552V558.8M892.05 555.6V558.8M896.82 555.6V558.8M901.60 555.6V558.8M906.38 555.6V558.8M911.16 555.6V558.8M915.93 555.6V558.8M920.71 555.6V558.8M925.49 555.6V558.8M930.27 555.6V558.8M935.04 555.6V558.8M939.82 555.6V558.8M944.60 552V558.8M949.38 555.6V558.8M954.15 555.6V558.8M958.93 555.6V558.8M963.71 555.6V558.8M968.49 555.6V558.8M973.26 555.6V558.8M978.04 555.6V558.8M982.82 555.6V558.8M987.60 555.6V558.8M992.38 555.6V558.8M997.15 555.6V558.8M1001.93 552V558.8M1006.71 555.6V558.8M1011.49 555.6V558.8M1016.26 555.6V558.8M1021.04 555.6V558.8M1025.82 555.6V558.8M1030.60 555.6V558.8M1035.37 555.6V558.8M1040.15 555.6V558.8M1044.93 555.6V558.8M1049.71 555.6V558.8M1054.48 555.6V558.8M1059.26 552V558.8M1064.04 555.6V558.8M1068.82 555.6V558.8M1073.59 555.6V558.8M1078.37 555.6V558.8M1083.15 555.6V558.8M1087.92 555.6V558.8M1092.70 555.6V558.8M1097.48 555.6V558.8M1102.26 555.6V558.8M1107.04 555.6V558.8M1111.81 555.6V558.8M1116.59 552V558.8M1121.37 555.6V558.8M1126.14 555.6V558.8M1130.92 555.6V558.8M1135.70 555.6V558.8M1140.48 555.6V558.8M1145.25 555.6V558.8M1150.03 555.6V558.8M1154.81 555.6V558.8M1159.59 555.6V558.8M1164.37 555.6V558.8M1169.14 555.6V558.8M1173.92 552V558.8M1178.70 555.6V558.8M1183.47 555.6V558.8M1188.25 555.6V558.8M1193.03 555.6V558.8M1197.81 555.6V558.8M1202.58 555.6V558.8M1207.36 555.6V558.8M1212.14 555.6V558.8M1216.92 555.6V558.8M1221.69 555.6V558.8M1226.47 555.6V558.8M1231.25 552V558.8M1236.03 555.6V558.8M1240.80 555.6V558.8M1245.58 555.6V558.8M1250.36 555.6V558.8M1255.14 555.6V558.8M1259.91 555.6V558.8M1264.69 555.6V558.8M1269.47 555.6V558.8M1274.25 555.6V558.8M1279.02 555.6V558.8M1283.80 555.6V558.8M1288.58 552V558.8M1293.36 555.6V558.8M1298.13 555.6V558.8M1302.91 555.6V558.8M1307.69 555.6V558.8M1312.47 555.6V558.8M1317.24 555.6V558.8M1322.02 555.6V558.8M1326.80 555.6V558.8M1331.58 555.6V558.8M1336.35 555.6V558.8M1341.13 555.6V558.8M1345.91 552V558.8M1350.69 555.6V558.8M1355.46 555.6V558.8M1360.24 555.6V558.8M1365.02 555.6V558.8M1369.80 555.6V558.8M1374.57 555.6V558.8M1379.35 555.6V558.8M1384.13 555.6V558.8M1388.91 555.6V558.8M1393.68 555.6V558.8M1398.46 555.6V558.8M1403.24 552V558.8M1408.02 555.6V558.8M1412.79 555.6V558.8M1417.57 555.6V558.8M1422.35 555.6V558.8M1427.13 555.6V558.8M1431.90 555.6V558.8M1436.68 555.6V558.8M1441.46 555.6V558.8M1446.24 555.6V558.8M1451.01 555.6V558.8M1455.79 555.6V558.8" stroke="#8d8d62" stroke-width=".9" fill="none"/>
<rect x="937" y="559.9" width="506" height="1.5" fill="#d6e23c"/>
<rect x="937.0" y="561.4" width="39.3" height="43.2" fill="#7a8a8a" />
<path d="M937 561.4 H976.3 V581 Q962 584 951 580 Q943 574 937 576 Z" fill="#38463f"/>
<path d="M937 561.4 H952 Q944 566 937 573 Z" fill="#f4f6f2"/>
<rect x="937.0" y="581.0" width="39.3" height="23.6" fill="#6d7c7e" />
<ellipse cx="950.5" cy="593" rx="2.6" ry="2" fill="#d8d23a"/>
<rect x="976.3" y="561.4" width="101.7" height="43.2" fill="url(#gC2)" />
<ellipse cx="983.0" cy="586" rx="4.2" ry="4.6" fill="#c9433f"/><circle cx="983.0" cy="579.6" r="1.7" fill="#2a2220"/><ellipse cx="983.0" cy="592.5" rx="4" ry="2.6" fill="#b4564f" opacity=".8"/>
<ellipse cx="1020.5" cy="586" rx="4.2" ry="4.6" fill="#c9433f"/><circle cx="1020.5" cy="579.6" r="1.7" fill="#2a2220"/><ellipse cx="1020.5" cy="592.5" rx="4" ry="2.6" fill="#b4564f" opacity=".8"/>
<ellipse cx="1037.5" cy="586" rx="4.2" ry="4.6" fill="#c9433f"/><circle cx="1037.5" cy="579.6" r="1.7" fill="#2a2220"/><ellipse cx="1037.5" cy="592.5" rx="4" ry="2.6" fill="#b4564f" opacity=".8"/>
<ellipse cx="1075.0" cy="586" rx="4.2" ry="4.6" fill="#c9433f"/><circle cx="1075.0" cy="579.6" r="1.7" fill="#2a2220"/><ellipse cx="1075.0" cy="592.5" rx="4" ry="2.6" fill="#b4564f" opacity=".8"/>
<path d="M1012 589 L1029 591 L1029 596 L1015 594 Z M1068 589 L1078 590 V595 L1070 593 Z" fill="#e4c46a"/>
<path d="M1002 595 L997 604.6 H1007 Z M1058 595 L1053 604.6 H1063 Z" fill="#e04a5c"/>
<path d="M1030 561.4V604.6" stroke="#b8d2e2" stroke-width=".6" opacity=".6"/>
<rect x="1078.0" y="561.4" width="47.8" height="43.2" fill="url(#gC3)" />
<path d="M1078 572 Q1090 566 1100 570 T1125.8 568 V561.4 H1078 Z" fill="#10171a"/>
<ellipse cx="1100" cy="583" rx="18" ry="6" fill="#d8ecec" opacity=".7"/>
<path d="M1078 594 L1092 600 L1090 604.6 H1078 Z" fill="#1c2022"/>
<path d="M1090 604.6 Q1092 596 1102 595 Q1114 596 1118 604.6 Z" fill="#d89c72"/>
<rect x="1125.8" y="561.4" width="47.4" height="43.2" fill="#3f6a3c" />
<path d="M1138 561.4 H1166 Q1158 568 1152 568 Q1145 567 1138 561.4 Z" fill="#f2f5ee"/>
<path d="M1136 566 Q1150 580 1158 566 L1160 590 Q1150 596 1138 588 Z" fill="#7f9f86" opacity=".55"/>
<path d="M1144.5 577 L1146.5 577 L1147.5 604.6 H1143 Z" fill="#e8f0ec"/>
<path d="M1125.8 561.4 H1134 L1130 604.6 H1125.8 Z" fill="#2a4a2c"/>
<path d="M1160 561.4 H1173.2 V604.6 H1156 Z" fill="#2f5630"/>
<rect x="1173.2" y="561.4" width="47.8" height="43.2" fill="#b5d8d6" />
<path d="M1173.2 561.4 H1221 V575 Q1200 566 1186 572 L1173.2 580 Z" fill="#7fb0b4"/>
<ellipse cx="1206" cy="585" rx="14" ry="10" fill="#e6f3f0" opacity=".85"/>
<path d="M1173.2 561.4 L1178 561.4 L1204 604.6 H1199 Z" fill="#1d2326"/>
<ellipse cx="1193" cy="593" rx="5" ry="3.6" fill="#d8956a"/>
<path d="M1180 604.6 Q1190 597 1203 604.6 Z" fill="#3f9a44"/>
<path d="M1210 572 L1221 566 V604.6 L1214 604.6 Z" fill="#5f8f94" opacity=".8"/>
<rect x="1221.0" y="561.4" width="85.7" height="43.2" fill="url(#gC6)" />
<path d="M1221 578 H1306.7 V580 H1221 Z" fill="#6f9098" opacity=".6"/>
<ellipse cx="1232" cy="586" rx="6" ry="1.3" fill="#6f98a0" opacity=".55"/>
<ellipse cx="1248" cy="590" rx="8" ry="1.3" fill="#6f98a0" opacity=".55"/>
<ellipse cx="1240" cy="597" rx="9" ry="1.3" fill="#6f98a0" opacity=".55"/>
<ellipse cx="1262" cy="585" rx="5" ry="1.3" fill="#6f98a0" opacity=".55"/>
<ellipse cx="1278" cy="588" rx="8" ry="1.3" fill="#6f98a0" opacity=".55"/>
<ellipse cx="1290" cy="595" rx="9" ry="1.3" fill="#6f98a0" opacity=".55"/>
<ellipse cx="1300" cy="586" rx="5" ry="1.3" fill="#6f98a0" opacity=".55"/>
<ellipse cx="1270" cy="599" rx="8" ry="1.3" fill="#6f98a0" opacity=".55"/>
<ellipse cx="1228" cy="600" rx="5" ry="1.3" fill="#6f98a0" opacity=".55"/>
<ellipse cx="1255" cy="602" rx="7" ry="1.3" fill="#6f98a0" opacity=".55"/>
<ellipse cx="1296" cy="602" rx="6" ry="1.3" fill="#6f98a0" opacity=".55"/>
<path d="M1245.5 567 L1247 567 L1247.5 578 H1244.5 Z M1293 567 L1294.5 567 L1295 578 H1292 Z" fill="#c8d8d4"/>
<path d="M1221 561.4 H1236 Q1228 566 1221 568 Z M1266.9 561.4 H1280 Q1272 566 1266.9 567 Z" fill="#eef2ec"/>
<circle cx="1260" cy="579" r="1.3" fill="#d8d83a"/><circle cx="1303" cy="579" r="1.3" fill="#d8d83a"/>
<path d="M1266.9 561.4V604.6" stroke="#20363c" stroke-width=".6"/>
<rect x="1306.7" y="561.4" width="136.3" height="43.2" fill="url(#gC7)" />
<path d="M1332.0 561.4 H1336.0 L1338.0 590 H1330.5 Z" fill="#e6efee" opacity=".92"/>
<path d="M1341.0 570 H1343.0 L1344.5 590 H1340.5 Z" fill="#cfdcdc" opacity=".7"/>
<rect x="1330.0" y="590" width="9" height="12" fill="#8fa8ac" opacity=".35"/>
<path d="M1379.0 561.4 H1383.0 L1385.0 590 H1377.5 Z" fill="#e6efee" opacity=".92"/>
<path d="M1388.0 570 H1390.0 L1391.5 590 H1387.5 Z" fill="#cfdcdc" opacity=".7"/>
<rect x="1377.0" y="590" width="9" height="12" fill="#8fa8ac" opacity=".35"/>
<path d="M1427.0 561.4 H1431.0 L1433.0 590 H1425.5 Z" fill="#e6efee" opacity=".92"/>
<path d="M1436.0 570 H1438.0 L1439.5 590 H1435.5 Z" fill="#cfdcdc" opacity=".7"/>
<rect x="1425.0" y="590" width="9" height="12" fill="#8fa8ac" opacity=".35"/>
<circle cx="1310" cy="591" r="1.2" fill="#d8dc3c"/>
<circle cx="1316" cy="591" r="1.2" fill="#d8dc3c"/>
<circle cx="1345" cy="591" r="1.2" fill="#d8dc3c"/>
<circle cx="1356" cy="591" r="1.2" fill="#d8dc3c"/>
<circle cx="1362" cy="591" r="1.2" fill="#d8dc3c"/>
<circle cx="1372" cy="591" r="1.2" fill="#d8dc3c"/>
<circle cx="1404" cy="591" r="1.2" fill="#d8dc3c"/>
<circle cx="1410" cy="591" r="1.2" fill="#d8dc3c"/>
<circle cx="1416" cy="591" r="1.2" fill="#d8dc3c"/>
<path d="M1353 561.4V604.6M1400 561.4V604.6" stroke="#1a2e26" stroke-width=".6"/>
<rect x="937.0" y="608.2" width="506.0" height="43.8" fill="#0f5b7e" />
<path d="M937 638.6 L937.0 630.8 L938.0 630.6 L939.0 630.0 L940.0 630.0 L941.0 629.8 L942.0 630.8 L943.0 629.2 L944.0 629.2 L945.0 628.7 L946.0 622.6 L947.0 625.1 L948.0 620.3 L949.0 629.3 L950.0 622.0 L951.0 622.4 L952.0 621.0 L953.0 627.3 L954.0 622.8 L955.0 620.8 L956.0 622.0 L957.0 621.5 L958.0 620.5 L959.0 622.2 L960.0 621.3 L961.0 620.7 L962.0 625.1 L963.0 624.2 L964.0 628.5 L965.0 628.6 L966.0 627.9 L967.0 627.8 L968.0 628.0 L969.0 621.1 L970.0 620.3 L971.0 621.5 L972.0 622.8 L973.0 620.9 L974.0 620.4 L975.0 621.8 L976.0 625.2 L977.0 630.3 L978.0 628.1 L979.0 628.0 L980.0 627.7 L981.0 628.0 L982.0 627.5 L983.0 627.2 L984.0 622.1 L985.0 621.9 L986.0 625.2 L987.0 622.4 L988.0 622.3 L989.0 621.1 L990.0 623.0 L991.0 621.8 L992.0 620.0 L993.0 621.4 L994.0 626.6 L995.0 620.1 L996.0 620.2 L997.0 621.7 L998.0 622.7 L999.0 629.7 L1000.0 629.0 L1001.0 628.3 L1002.0 630.0 L1003.0 622.7 L1004.0 624.5 L1005.0 629.3 L1006.0 627.2 L1007.0 629.8 L1008.0 626.4 L1009.0 621.5 L1010.0 629.6 L1011.0 621.9 L1012.0 625.9 L1013.0 622.9 L1014.0 627.4 L1015.0 627.3 L1016.0 621.3 L1017.0 620.2 L1018.0 622.2 L1019.0 622.5 L1020.0 621.3 L1021.0 621.9 L1022.0 620.4 L1023.0 620.3 L1024.0 620.4 L1025.0 622.3 L1026.0 628.2 L1027.0 623.2 L1028.0 623.9 L1029.0 623.8 L1030.0 625.5 L1031.0 627.0 L1032.0 628.1 L1033.0 628.3 L1034.0 628.1 L1035.0 628.0 L1036.0 628.2 L1037.0 628.8 L1038.0 628.2 L1039.0 628.5 L1040.0 629.0 L1041.0 628.9 L1042.0 628.5 L1043.0 628.9 L1044.0 630.0 L1045.0 630.6 L1046.0 628.7 L1047.0 629.2 L1048.0 628.7 L1049.0 629.1 L1050.0 630.7 L1051.0 628.8 L1052.0 629.1 L1053.0 627.2 L1054.0 624.1 L1055.0 625.4 L1056.0 625.5 L1057.0 625.6 L1058.0 625.9 L1059.0 625.6 L1060.0 625.3 L1061.0 625.7 L1062.0 627.2 L1063.0 630.2 L1064.0 630.7 L1065.0 630.3 L1066.0 630.3 L1067.0 630.1 L1068.0 630.3 L1069.0 630.2 L1070.0 630.3 L1071.0 630.3 L1072.0 630.2 L1073.0 630.3 L1074.0 630.2 L1075.0 630.3 L1076.0 630.3 L1077.0 630.4 L1078.0 630.4 L1079.0 630.3 L1080.0 630.3 L1081.0 630.4 L1082.0 630.7 L1083.0 630.5 L1084.0 630.5 L1085.0 630.6 L1086.0 630.4 L1087.0 624.0 L1088.0 626.7 L1089.0 620.2 L1090.0 622.3 L1091.0 621.7 L1092.0 619.8 L1093.0 622.5 L1094.0 621.4 L1095.0 622.4 L1096.0 626.4 L1097.0 621.2 L1098.0 622.9 L1099.0 621.0 L1100.0 622.8 L1101.0 620.5 L1102.0 622.7 L1103.0 622.9 L1104.0 628.6 L1105.0 621.6 L1106.0 620.4 L1107.0 622.5 L1108.0 621.2 L1109.0 629.6 L1110.0 620.8 L1111.0 622.8 L1112.0 621.0 L1113.0 622.7 L1114.0 623.1 L1115.0 623.0 L1116.0 623.9 L1117.0 629.6 L1118.0 626.2 L1119.0 630.4 L1120.0 628.6 L1121.0 628.9 L1122.0 629.1 L1123.0 630.5 L1124.0 630.8 L1125.0 630.8 L1126.0 630.1 L1127.0 630.3 L1128.0 630.5 L1129.0 630.1 L1130.0 630.2 L1131.0 630.3 L1132.0 630.2 L1133.0 630.3 L1134.0 630.2 L1135.0 630.3 L1136.0 630.9 L1137.0 630.4 L1138.0 630.8 L1139.0 622.7 L1140.0 620.2 L1141.0 622.1 L1142.0 622.1 L1143.0 622.5 L1144.0 622.2 L1145.0 619.9 L1146.0 622.2 L1147.0 622.0 L1148.0 623.0 L1149.0 621.5 L1150.0 622.4 L1151.0 623.0 L1152.0 622.7 L1153.0 629.8 L1154.0 622.0 L1155.0 621.1 L1156.0 620.6 L1157.0 620.7 L1158.0 621.8 L1159.0 625.1 L1160.0 620.7 L1161.0 622.9 L1162.0 620.1 L1163.0 620.7 L1164.0 622.6 L1165.0 621.4 L1166.0 620.4 L1167.0 621.1 L1168.0 620.8 L1169.0 629.3 L1170.0 627.4 L1171.0 627.4 L1172.0 626.8 L1173.0 626.7 L1174.0 629.5 L1175.0 626.5 L1176.0 621.4 L1177.0 626.7 L1178.0 620.6 L1179.0 622.8 L1180.0 620.7 L1181.0 620.6 L1182.0 621.4 L1183.0 621.5 L1184.0 620.5 L1185.0 626.8 L1186.0 622.5 L1187.0 620.6 L1188.0 627.2 L1189.0 622.8 L1190.0 620.8 L1191.0 620.8 L1192.0 622.9 L1193.0 629.3 L1194.0 628.3 L1195.0 625.5 L1196.0 627.0 L1197.0 625.7 L1198.0 621.6 L1199.0 622.3 L1200.0 622.3 L1201.0 622.5 L1202.0 625.2 L1203.0 620.4 L1204.0 620.2 L1205.0 622.3 L1206.0 627.6 L1207.0 623.0 L1208.0 621.6 L1209.0 622.5 L1210.0 622.0 L1211.0 623.0 L1212.0 625.8 L1213.0 620.0 L1214.0 620.9 L1215.0 623.4 L1216.0 622.9 L1217.0 625.3 L1218.0 629.7 L1219.0 627.3 L1220.0 627.8 L1221.0 628.3 L1222.0 630.1 L1223.0 629.0 L1224.0 629.1 L1225.0 628.3 L1226.0 626.9 L1227.0 628.8 L1228.0 624.8 L1229.0 623.5 L1230.0 629.5 L1231.0 627.9 L1232.0 626.6 L1233.0 627.5 L1234.0 627.5 L1235.0 628.6 L1236.0 629.3 L1237.0 630.7 L1238.0 629.7 L1239.0 629.7 L1240.0 629.6 L1241.0 630.6 L1242.0 630.8 L1243.0 630.8 L1244.0 630.3 L1245.0 630.3 L1246.0 630.3 L1247.0 630.4 L1248.0 630.4 L1249.0 630.5 L1250.0 630.6 L1251.0 630.4 L1252.0 630.3 L1253.0 630.5 L1254.0 630.4 L1255.0 630.3 L1256.0 630.7 L1257.0 630.5 L1258.0 630.4 L1259.0 630.8 L1260.0 630.5 L1261.0 630.4 L1262.0 630.4 L1263.0 630.9 L1264.0 630.5 L1265.0 630.5 L1266.0 630.5 L1267.0 630.6 L1268.0 630.6 L1269.0 630.6 L1270.0 630.6 L1271.0 630.5 L1272.0 630.3 L1273.0 629.4 L1274.0 621.3 L1275.0 621.8 L1276.0 627.0 L1277.0 622.0 L1278.0 619.9 L1279.0 620.2 L1280.0 622.2 L1281.0 619.9 L1282.0 628.5 L1283.0 621.4 L1284.0 621.7 L1285.0 620.9 L1286.0 628.9 L1287.0 621.9 L1288.0 626.6 L1289.0 620.4 L1290.0 621.4 L1291.0 619.9 L1292.0 620.4 L1293.0 622.3 L1294.0 622.1 L1295.0 627.5 L1296.0 622.3 L1297.0 620.9 L1298.0 622.5 L1299.0 622.3 L1300.0 629.3 L1301.0 622.8 L1302.0 620.1 L1303.0 620.7 L1304.0 620.0 L1305.0 622.4 L1306.0 626.3 L1307.0 626.7 L1308.0 627.1 L1309.0 630.2 L1310.0 627.2 L1311.0 625.2 L1312.0 619.9 L1313.0 621.9 L1314.0 620.4 L1315.0 622.8 L1316.0 621.8 L1317.0 622.4 L1318.0 625.5 L1319.0 621.7 L1320.0 626.2 L1321.0 629.8 L1322.0 620.1 L1323.0 620.6 L1324.0 621.9 L1325.0 619.9 L1326.0 622.2 L1327.0 622.0 L1328.0 623.0 L1329.0 621.8 L1330.0 628.2 L1331.0 626.6 L1332.0 625.5 L1333.0 626.4 L1334.0 626.3 L1335.0 628.2 L1336.0 620.4 L1337.0 620.4 L1338.0 621.1 L1339.0 622.0 L1340.0 626.1 L1341.0 622.4 L1342.0 628.8 L1343.0 622.9 L1344.0 622.0 L1345.0 620.2 L1346.0 628.7 L1347.0 622.7 L1348.0 620.7 L1349.0 622.4 L1350.0 621.8 L1351.0 622.1 L1352.0 627.6 L1353.0 623.3 L1354.0 624.5 L1355.0 628.2 L1356.0 626.2 L1357.0 626.9 L1358.0 626.8 L1359.0 627.6 L1360.0 628.1 L1361.0 628.4 L1362.0 629.9 L1363.0 629.7 L1364.0 630.0 L1365.0 630.3 L1366.0 630.9 L1367.0 630.1 L1368.0 630.1 L1369.0 630.1 L1370.0 630.3 L1371.0 630.5 L1372.0 630.2 L1373.0 630.3 L1374.0 630.4 L1375.0 630.3 L1376.0 630.3 L1377.0 630.4 L1378.0 630.7 L1379.0 630.4 L1380.0 630.3 L1381.0 630.9 L1382.0 630.4 L1383.0 630.7 L1384.0 630.5 L1385.0 630.4 L1386.0 630.5 L1387.0 630.5 L1388.0 630.5 L1389.0 630.4 L1390.0 630.8 L1391.0 630.5 L1392.0 630.6 L1393.0 630.5 L1394.0 630.5 L1395.0 630.8 L1396.0 630.6 L1397.0 630.5 L1398.0 630.6 L1399.0 630.5 L1400.0 630.4 L1401.0 621.3 L1402.0 629.1 L1403.0 628.3 L1404.0 630.5 L1405.0 627.8 L1406.0 627.6 L1407.0 620.0 L1408.0 620.1 L1409.0 625.9 L1410.0 620.5 L1411.0 621.7 L1412.0 625.9 L1413.0 622.3 L1414.0 621.3 L1415.0 622.6 L1416.0 620.7 L1417.0 622.9 L1418.0 626.2 L1419.0 625.8 L1420.0 621.1 L1421.0 621.0 L1422.0 621.7 L1423.0 621.6 L1424.0 621.6 L1425.0 622.9 L1426.0 621.4 L1427.0 620.6 L1428.0 627.7 L1429.0 627.6 L1430.0 622.6 L1431.0 622.7 L1432.0 627.4 L1433.0 626.8 L1434.0 620.7 L1435.0 627.4 L1436.0 621.4 L1437.0 625.2 L1438.0 620.3 L1439.0 620.7 L1440.0 622.4 L1441.0 621.4 L1442.0 625.4 L1443.0 620.5 L1443 638.6 Z" fill="#4fb6f2"/>
<path d="M937 652.0 L937.0 651.3 L938.0 651.1 L939.0 650.4 L940.0 650.4 L941.0 650.3 L942.0 651.3 L943.0 649.7 L944.0 649.7 L945.0 649.1 L946.0 642.6 L947.0 645.3 L948.0 640.2 L949.0 649.7 L950.0 642.1 L951.0 642.5 L952.0 641.0 L953.0 647.6 L954.0 642.9 L955.0 640.8 L956.0 642.0 L957.0 641.6 L958.0 640.4 L959.0 642.3 L960.0 641.3 L961.0 640.6 L962.0 645.3 L963.0 644.4 L964.0 648.9 L965.0 649.0 L966.0 648.3 L967.0 648.2 L968.0 648.3 L969.0 641.2 L970.0 640.3 L971.0 641.5 L972.0 642.9 L973.0 640.9 L974.0 640.3 L975.0 641.8 L976.0 645.4 L977.0 650.8 L978.0 648.4 L979.0 648.3 L980.0 648.0 L981.0 648.4 L982.0 647.8 L983.0 647.5 L984.0 642.2 L985.0 641.9 L986.0 645.4 L987.0 642.5 L988.0 642.3 L989.0 641.1 L990.0 643.1 L991.0 641.9 L992.0 639.9 L993.0 641.4 L994.0 646.9 L995.0 640.1 L996.0 640.2 L997.0 641.8 L998.0 642.8 L999.0 650.1 L1000.0 649.4 L1001.0 648.7 L1002.0 650.4 L1003.0 642.8 L1004.0 644.7 L1005.0 649.7 L1006.0 647.5 L1007.0 650.2 L1008.0 646.7 L1009.0 641.5 L1010.0 650.0 L1011.0 641.9 L1012.0 646.1 L1013.0 643.0 L1014.0 647.7 L1015.0 647.6 L1016.0 641.3 L1017.0 640.2 L1018.0 642.2 L1019.0 642.5 L1020.0 641.3 L1021.0 642.0 L1022.0 640.4 L1023.0 640.2 L1024.0 640.4 L1025.0 642.3 L1026.0 648.6 L1027.0 643.3 L1028.0 644.1 L1029.0 644.0 L1030.0 645.7 L1031.0 647.3 L1032.0 648.4 L1033.0 648.6 L1034.0 648.4 L1035.0 648.3 L1036.0 648.6 L1037.0 649.2 L1038.0 648.6 L1039.0 648.9 L1040.0 649.4 L1041.0 649.3 L1042.0 648.9 L1043.0 649.3 L1044.0 650.4 L1045.0 651.1 L1046.0 649.1 L1047.0 649.6 L1048.0 649.1 L1049.0 649.5 L1050.0 651.1 L1051.0 649.2 L1052.0 649.5 L1053.0 647.5 L1054.0 644.3 L1055.0 645.6 L1056.0 645.7 L1057.0 645.8 L1058.0 646.2 L1059.0 645.8 L1060.0 645.5 L1061.0 645.9 L1062.0 647.6 L1063.0 650.6 L1064.0 651.2 L1065.0 650.8 L1066.0 650.7 L1067.0 650.6 L1068.0 650.7 L1069.0 650.7 L1070.0 650.8 L1071.0 650.8 L1072.0 650.7 L1073.0 650.7 L1074.0 650.7 L1075.0 650.8 L1076.0 650.8 L1077.0 650.8 L1078.0 650.8 L1079.0 650.8 L1080.0 650.8 L1081.0 650.9 L1082.0 651.2 L1083.0 651.0 L1084.0 651.0 L1085.0 651.0 L1086.0 650.9 L1087.0 644.2 L1088.0 647.0 L1089.0 640.1 L1090.0 642.4 L1091.0 641.8 L1092.0 639.8 L1093.0 642.6 L1094.0 641.4 L1095.0 642.4 L1096.0 646.7 L1097.0 641.2 L1098.0 643.0 L1099.0 641.0 L1100.0 642.9 L1101.0 640.5 L1102.0 642.7 L1103.0 643.0 L1104.0 649.0 L1105.0 641.7 L1106.0 640.3 L1107.0 642.6 L1108.0 641.2 L1109.0 650.0 L1110.0 640.8 L1111.0 642.9 L1112.0 641.0 L1113.0 642.8 L1114.0 643.2 L1115.0 643.1 L1116.0 644.1 L1117.0 650.0 L1118.0 646.4 L1119.0 650.9 L1120.0 649.0 L1121.0 649.3 L1122.0 649.5 L1123.0 651.0 L1124.0 651.2 L1125.0 651.3 L1126.0 650.6 L1127.0 650.7 L1128.0 651.0 L1129.0 650.6 L1130.0 650.7 L1131.0 650.7 L1132.0 650.7 L1133.0 650.8 L1134.0 650.7 L1135.0 650.8 L1136.0 651.4 L1137.0 650.9 L1138.0 651.3 L1139.0 642.8 L1140.0 640.2 L1141.0 642.2 L1142.0 642.1 L1143.0 642.6 L1144.0 642.2 L1145.0 639.8 L1146.0 642.3 L1147.0 642.1 L1148.0 643.1 L1149.0 641.5 L1150.0 642.4 L1151.0 643.1 L1152.0 642.8 L1153.0 650.2 L1154.0 642.1 L1155.0 641.1 L1156.0 640.6 L1157.0 640.7 L1158.0 641.8 L1159.0 645.3 L1160.0 640.7 L1161.0 643.0 L1162.0 640.1 L1163.0 640.6 L1164.0 642.6 L1165.0 641.4 L1166.0 640.4 L1167.0 641.1 L1168.0 640.8 L1169.0 649.7 L1170.0 647.7 L1171.0 647.8 L1172.0 647.1 L1173.0 647.0 L1174.0 650.0 L1175.0 646.8 L1176.0 641.4 L1177.0 647.0 L1178.0 640.6 L1179.0 642.8 L1180.0 640.6 L1181.0 640.6 L1182.0 641.4 L1183.0 641.5 L1184.0 640.5 L1185.0 647.1 L1186.0 642.6 L1187.0 640.6 L1188.0 647.5 L1189.0 642.9 L1190.0 640.8 L1191.0 640.8 L1192.0 642.9 L1193.0 649.8 L1194.0 648.6 L1195.0 645.7 L1196.0 647.3 L1197.0 645.9 L1198.0 641.6 L1199.0 642.4 L1200.0 642.4 L1201.0 642.6 L1202.0 645.4 L1203.0 640.3 L1204.0 640.1 L1205.0 642.3 L1206.0 647.9 L1207.0 643.1 L1208.0 641.6 L1209.0 642.6 L1210.0 642.0 L1211.0 643.1 L1212.0 646.0 L1213.0 640.0 L1214.0 640.9 L1215.0 643.6 L1216.0 643.0 L1217.0 645.5 L1218.0 650.2 L1219.0 647.6 L1220.0 648.1 L1221.0 648.6 L1222.0 650.5 L1223.0 649.4 L1224.0 649.5 L1225.0 648.7 L1226.0 647.2 L1227.0 649.2 L1228.0 645.0 L1229.0 643.6 L1230.0 649.9 L1231.0 648.2 L1232.0 646.8 L1233.0 647.9 L1234.0 647.9 L1235.0 648.9 L1236.0 649.7 L1237.0 651.2 L1238.0 650.1 L1239.0 650.1 L1240.0 650.1 L1241.0 651.1 L1242.0 651.3 L1243.0 651.2 L1244.0 650.8 L1245.0 650.8 L1246.0 650.7 L1247.0 650.8 L1248.0 650.9 L1249.0 650.9 L1250.0 651.1 L1251.0 650.9 L1252.0 650.8 L1253.0 650.9 L1254.0 650.9 L1255.0 650.8 L1256.0 651.2 L1257.0 651.0 L1258.0 650.9 L1259.0 651.3 L1260.0 651.0 L1261.0 650.9 L1262.0 650.9 L1263.0 651.4 L1264.0 651.0 L1265.0 650.9 L1266.0 651.0 L1267.0 651.0 L1268.0 651.1 L1269.0 651.1 L1270.0 651.0 L1271.0 651.0 L1272.0 650.8 L1273.0 649.9 L1274.0 641.3 L1275.0 641.8 L1276.0 647.3 L1277.0 642.1 L1278.0 639.9 L1279.0 640.1 L1280.0 642.3 L1281.0 639.9 L1282.0 648.8 L1283.0 641.4 L1284.0 641.7 L1285.0 640.9 L1286.0 649.3 L1287.0 642.0 L1288.0 646.9 L1289.0 640.4 L1290.0 641.4 L1291.0 639.8 L1292.0 640.3 L1293.0 642.4 L1294.0 642.1 L1295.0 647.8 L1296.0 642.3 L1297.0 640.9 L1298.0 642.6 L1299.0 642.4 L1300.0 649.7 L1301.0 642.9 L1302.0 640.1 L1303.0 640.6 L1304.0 640.0 L1305.0 642.5 L1306.0 646.5 L1307.0 647.0 L1308.0 647.4 L1309.0 650.7 L1310.0 647.5 L1311.0 645.4 L1312.0 639.9 L1313.0 641.9 L1314.0 640.3 L1315.0 642.9 L1316.0 641.8 L1317.0 642.5 L1318.0 645.7 L1319.0 641.7 L1320.0 646.4 L1321.0 650.3 L1322.0 640.0 L1323.0 640.6 L1324.0 642.0 L1325.0 639.9 L1326.0 642.2 L1327.0 642.0 L1328.0 643.1 L1329.0 641.8 L1330.0 648.5 L1331.0 646.9 L1332.0 645.7 L1333.0 646.7 L1334.0 646.6 L1335.0 648.6 L1336.0 640.4 L1337.0 640.3 L1338.0 641.1 L1339.0 642.0 L1340.0 646.3 L1341.0 642.4 L1342.0 649.2 L1343.0 643.0 L1344.0 642.0 L1345.0 640.1 L1346.0 649.1 L1347.0 642.8 L1348.0 640.7 L1349.0 642.5 L1350.0 641.9 L1351.0 642.2 L1352.0 647.9 L1353.0 643.4 L1354.0 644.7 L1355.0 648.5 L1356.0 646.5 L1357.0 647.2 L1358.0 647.1 L1359.0 648.0 L1360.0 648.4 L1361.0 648.8 L1362.0 650.3 L1363.0 650.1 L1364.0 650.5 L1365.0 650.7 L1366.0 651.4 L1367.0 650.5 L1368.0 650.5 L1369.0 650.6 L1370.0 650.7 L1371.0 651.0 L1372.0 650.7 L1373.0 650.8 L1374.0 650.8 L1375.0 650.8 L1376.0 650.7 L1377.0 650.9 L1378.0 651.2 L1379.0 650.9 L1380.0 650.8 L1381.0 651.4 L1382.0 650.9 L1383.0 651.2 L1384.0 650.9 L1385.0 650.9 L1386.0 650.9 L1387.0 651.0 L1388.0 651.0 L1389.0 650.9 L1390.0 651.3 L1391.0 650.9 L1392.0 651.1 L1393.0 651.0 L1394.0 651.0 L1395.0 651.3 L1396.0 651.1 L1397.0 651.0 L1398.0 651.1 L1399.0 650.9 L1400.0 650.9 L1401.0 641.3 L1402.0 649.5 L1403.0 648.7 L1404.0 650.9 L1405.0 648.1 L1406.0 647.9 L1407.0 640.0 L1408.0 640.1 L1409.0 646.1 L1410.0 640.5 L1411.0 641.7 L1412.0 646.1 L1413.0 642.4 L1414.0 641.4 L1415.0 642.7 L1416.0 640.7 L1417.0 643.0 L1418.0 646.5 L1419.0 646.0 L1420.0 641.1 L1421.0 641.0 L1422.0 641.7 L1423.0 641.7 L1424.0 641.6 L1425.0 643.0 L1426.0 641.5 L1427.0 640.5 L1428.0 648.0 L1429.0 648.0 L1430.0 642.7 L1431.0 642.8 L1432.0 647.8 L1433.0 647.1 L1434.0 640.6 L1435.0 647.8 L1436.0 641.4 L1437.0 645.5 L1438.0 640.2 L1439.0 640.6 L1440.0 642.4 L1441.0 641.4 L1442.0 645.6 L1443.0 640.5 L1443 652.0 Z" fill="#4fb6f2"/>
<rect x="937" y="630.2" width="506" height=".9" fill="#b9c6cc" opacity=".85"/>
<rect x="937" y="638.3" width="506" height=".7" fill="#0f5b7e" opacity=".5"/>
<path d="M1031 608.2V652M1306.7 608.2V652" stroke="#0a3f58" stroke-width="1"/>
<rect x="937.5" y="629.5" width="3.6" height="4" fill="#0f5b7e" stroke="#bcd" stroke-width=".5"/><rect x="937.5" y="647.6" width="3.6" height="4" fill="#0f5b7e" stroke="#bcd" stroke-width=".5"/>
<rect x="1031.8" y="629.5" width="3.6" height="4" fill="#0f5b7e" stroke="#bcd" stroke-width=".5"/><rect x="1031.8" y="647.6" width="3.6" height="4" fill="#0f5b7e" stroke="#bcd" stroke-width=".5"/>
<rect x="1307.5" y="629.5" width="3.6" height="4" fill="#0f5b7e" stroke="#bcd" stroke-width=".5"/><rect x="1307.5" y="647.6" width="3.6" height="4" fill="#0f5b7e" stroke="#bcd" stroke-width=".5"/>
<path d="M1003.7 612.4 a2.3 2.6 0 1 1 0 5.2 a2.3 2.6 0 1 1 0 -5.2 Z" fill="#f2f2f2"/>
<path d="M1006.7 613 L1008.5 611.8 V618.2 L1006.7 617 Z" fill="#f2f2f2"/>
<text x="1016.0" y="617.6" font-family="Liberation Serif, serif" font-style="italic" font-size="7.5" fill="#4f8aa4">fx</text>
<path d="M1279.7 612.4 a2.3 2.6 0 1 1 0 5.2 a2.3 2.6 0 1 1 0 -5.2 Z" fill="#f2f2f2"/>
<path d="M1282.7 613 L1284.5 611.8 V618.2 L1282.7 617 Z" fill="#f2f2f2"/>
<text x="1292.0" y="617.6" font-family="Liberation Serif, serif" font-style="italic" font-size="7.5" fill="#4f8aa4">fx</text>
<rect x="1054" y="556" width="1.5" height="96" fill="#4b93ea"/>
<path d="M1050 551 H1059.6 V555.6 L1056.6 558.8 H1053 L1050 555.6 Z" fill="#3f8ff0"/>
</g><rect x="793.5" y="604.9" width="650" height="2.9" fill="#343434"/><rect x="800" y="559.3" width="137" height=".8" fill="#303030"/></svg>
<svg style="left:823.5px;top:564.5px" width="8" height="10" viewBox="0 0 8 10"><path d="M1.6 4.4V2.8A2.1 2.1 0 0 1 5.6 2.2" stroke="#c9c9c9" stroke-width="1.1" fill="none"/><rect x="0.4" y="4.4" width="7" height="5.2" rx=".8" fill="#c9c9c9"/><rect x="3.4" y="6" width="1.2" height="2" fill="#222"/></svg>
<div class="t" style="left:840.0px;top:566.1px;font-size:8.20px;color:#bdbdbd;transform:scaleX(0.799);">V1</div>
<div class="t" style="left:855.5px;top:565.8px;font-size:8.80px;color:#c9c9c9;transform:scaleX(0.869);">Video 1</div>
<svg style="left:857px;top:582.5px" width="42" height="8" viewBox="0 0 42 8"><path d="M5.5 0.6 L2.4 4 L5.5 7.4 Z" fill="#6a6a6a"/><path d="M21 0.8 L24.2 4 L21 7.2 L17.8 4 Z" fill="none" stroke="#6a6a6a" stroke-width=".9"/><path d="M36 0.6 L39.1 4 L36 7.4 Z" fill="#6a6a6a"/></svg>
<svg style="left:823.5px;top:628.0px" width="8" height="10" viewBox="0 0 8 10"><path d="M1.6 4.4V2.8A2.1 2.1 0 0 1 5.6 2.2" stroke="#c9c9c9" stroke-width="1.1" fill="none"/><rect x="0.4" y="4.4" width="7" height="5.2" rx=".8" fill="#c9c9c9"/><rect x="3.4" y="6" width="1.2" height="2" fill="#222"/></svg>
<div class="t" style="left:839.8px;top:629.5px;font-size:8.20px;color:#bdbdbd;transform:scaleX(0.849);">A1</div>
<div class="t" style="left:855.5px;top:637.9px;font-size:8.80px;color:#c9c9c9;transform:scaleX(0.864);">Audio 1</div>
<svg style="left:856.5px;top:620.5px" width="10" height="8" viewBox="0 0 10 8"><rect x=".5" y="1" width="6.4" height="6" rx=".8" fill="none" stroke="#a9a9a9" stroke-width="1"/><path d="M6.9 3 L9.5 1.4 V6.6 L6.9 5 Z" fill="#a9a9a9"/><path d="M2 3H5.4M2 5H5.4" stroke="#a9a9a9" stroke-width=".7"/></svg>
<div class="t" style="left:874.8px;top:620.8px;font-size:7.60px;color:#8e8e8e;transform:scaleX(0.979);">M</div>
<div class="t" style="left:892.6px;top:620.8px;font-size:7.60px;color:#8e8e8e;transform:scaleX(0.868);">S</div>
<svg style="left:908px;top:619.5px" width="7" height="11" viewBox="0 0 7 11"><rect x="1.9" y=".3" width="3.2" height="6.2" rx="1.6" fill="#5a5a5a"/><path d="M.6 4.6A2.9 2.9 0 0 0 6.4 4.6M3.5 7.6V10M2 10.2H5" stroke="#5a5a5a" stroke-width=".9" fill="none"/></svg>
</div><div class="abs" style="left:90.4px;top:342.0px;width:3.0px;height:24.0px;background:#050505;border-radius:1px"></div>
<div class="abs" style="left:90.4px;top:382.0px;width:3.0px;height:38.0px;background:#050505;border-radius:1px"></div>
<div class="abs" style="left:90.4px;top:430.0px;width:3.0px;height:37.0px;background:#050505;border-radius:1px"></div>
<div class="abs" style="left:329.5px;top:395.6px;width:3.0px;height:59.0px;background:#050505;border-radius:1px"></div>
<div id="phone" class="abs"></div>
<div class="abs" style="left:0;top:0;width:1600px;height:800px;clip-path:inset(251px 1280px 80px 104px round 29px)">
<div class="abs" style="left:104.0px;top:251.0px;width:216.0px;height:469.0px;background:linear-gradient(180deg,#40464a 0%,#3d4246 18%,#3b3d40 40%,#38383a 70%,#343334 100%);"></div>
<div class="abs" style="left:104.0px;top:251.0px;width:216.0px;height:469.0px;background:radial-gradient(ellipse 75px 110px at 22% 21%,rgba(62,48,46,.8),rgba(62,48,46,0) 100%);"></div>
<div class="abs" style="left:104.0px;top:251.0px;width:216.0px;height:469.0px;background:radial-gradient(ellipse 110px 120px at 85% 70%,rgba(40,48,54,.6),rgba(40,48,54,0) 100%);"></div>
<div class="abs" style="left:177.0px;top:257.3px;width:69.0px;height:20.2px;background:#000;border-radius:10.1px"></div>
<svg style="left:257.5px;top:263.5px" width="13" height="8" viewBox="0 0 13 8"><rect x="0.3" y="5" width="2.2" height="3" rx=".5" fill="#fff"/><rect x="3.5" y="3.6" width="2.2" height="4.4" rx=".5" fill="#fff"/><rect x="6.7" y="2" width="2.2" height="6" rx=".5" fill="#fff"/><rect x="9.9" y="0.2" width="2.2" height="7.8" rx=".5" fill="#fff"/></svg>
<svg style="left:272.5px;top:263.5px" width="11" height="8" viewBox="0 0 11 8"><path d="M0.7 2.9 Q5.5 -1.2 10.3 2.9" stroke="#fff" stroke-width="1.3" fill="none"/><path d="M2.6 4.8 Q5.5 2.3 8.4 4.8" stroke="#fff" stroke-width="1.3" fill="none"/><circle cx="5.5" cy="6.8" r="1.1" fill="#fff"/></svg>
<div class="abs" style="left:287.0px;top:264.3px;width:13.0px;height:6.6px;background:#fff;border-radius:2px"></div>
<div class="abs" style="left:300.6px;top:266.3px;width:1.0px;height:2.6px;background:#bbb;border-radius:1px"></div>
<div class="abs" style="left:131.0px;top:261.5px;width:3.5px;height:1.0px;background:#8a8d8f;"></div>
<div class="t" style="left:195.6px;top:291.9px;font-size:11.00px;color:#eeeeee;font-weight:700;transform:scaleX(0.850);">Export</div>
<div class="abs" style="left:291.8px;top:288.6px;width:16.2px;height:16.2px;background:#5a5d61;border-radius:50%"></div>
<svg style="left:296.4px;top:293.2px" width="7" height="7" viewBox="0 0 7 7"><path d="M0.8 0.8 L6.2 6.2 M6.2 0.8 L0.8 6.2" stroke="#f4f4f4" stroke-width="1.2" stroke-linecap="round"/></svg>
<div class="abs" style="left:112.5px;top:318.0px;width:196.0px;height:16.8px;background:rgba(120,122,128,.32);border-radius:3.5px"></div>
<div class="abs" style="left:210.5px;top:318.0px;width:98.0px;height:16.8px;background:rgba(132,130,136,.5);border-radius:3.5px"></div>
<div class="abs" style="left:122.5px;top:321.0px;width:3.0px;height:1.0px;background:#8b8b8f;"></div>
<div class="abs" style="left:216.0px;top:321.0px;width:10.0px;height:1.4px;background:#a5a5aa;"></div>
<svg style="left:142.6px;top:345.7px;border-radius:4px;overflow:hidden" width="137.4" height="245"><use href="#kscene" width="137.4" height="245"/></svg>
<div class="t" style="left:112.3px;top:602.6px;font-size:9.30px;color:#e6e6e6;transform:scaleX(0.923);">A copy of this project will be sent to Premiere on</div>
<div class="t" style="left:112.3px;top:614.9px;font-size:9.30px;color:#e6e6e6;transform:scaleX(0.909);">desktop via Adobe cloud storage.</div>
<div class="t" style="left:112.3px;top:632.9px;font-size:9.10px;color:#dcdcdc;transform:scaleX(0.888);">Files:</div>
<div class="t" style="left:135.8px;top:632.9px;font-size:9.10px;color:#f2f2f2;font-weight:700;transform:scaleX(0.830);">16</div>
<div class="t" style="left:153.3px;top:632.9px;font-size:9.10px;color:#dcdcdc;transform:scaleX(0.865);">Size:</div>
<div class="t" style="left:175.5px;top:632.9px;font-size:9.10px;color:#f2f2f2;font-weight:700;transform:scaleX(0.935);">520 MB</div>
<div class="abs" style="left:112.3px;top:657.0px;width:198.8px;height:23.0px;background:#3d5cf0;border-radius:11.5px"></div>
<div class="t" style="left:186.3px;top:663.8px;font-size:9.60px;color:#ffffff;font-weight:700;transform:scaleX(0.860);">Send project</div>
<div class="t" style="left:140.2px;top:689.2px;font-size:8.60px;color:#55585b;transform:scaleX(0.986);">Learn more about supported features.</div>
<div class="abs" style="left:175.0px;top:712.4px;width:73.2px;height:3.0px;background:#f5f5f5;border-radius:1.5px"></div>
</div></body>
</html>
